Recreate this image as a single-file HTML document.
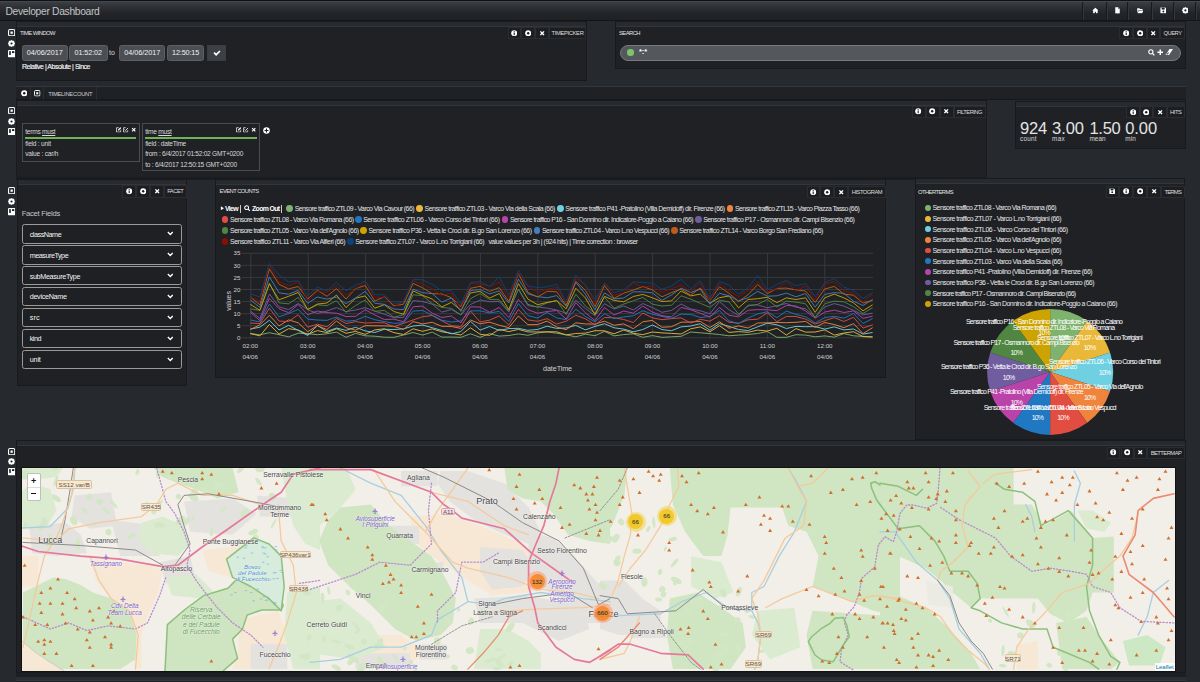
<!DOCTYPE html><html><head><meta charset="utf-8"><style>*{box-sizing:border-box;margin:0;padding:0}
html,body{width:1200px;height:682px;overflow:hidden}
body{background:#26292e;font-family:"Liberation Sans",sans-serif;position:relative}
.a{position:absolute}
.tx{white-space:nowrap;line-height:1}
</style></head><body><svg width="0" height="0" style="position:absolute"><defs>
<symbol id="info" viewBox="0 0 16 16"><circle cx="8" cy="8" r="7.5" fill="#fff"/><rect x="6.6" y="3" width="2.8" height="2.6" fill="#1c1e21"/><rect x="6.6" y="6.6" width="2.8" height="6.4" fill="#1c1e21"/></symbol>
<symbol id="cog" viewBox="0 0 16 16"><path fill="#fff" d="M13.62 5.89 L15.63 5.97 L15.63 10.03 L13.62 10.11 L13.47 10.48 L14.83 11.96 L11.96 14.83 L10.48 13.47 L10.11 13.62 L10.03 15.63 L5.97 15.63 L5.89 13.62 L5.52 13.47 L4.04 14.83 L1.17 11.96 L2.53 10.48 L2.38 10.11 L0.37 10.03 L0.37 5.97 L2.38 5.89 L2.53 5.52 L1.17 4.04 L4.04 1.17 L5.52 2.53 L5.89 2.38 L5.97 0.37 L10.03 0.37 L10.11 2.38 L10.48 2.53 L11.96 1.17 L14.83 4.04 L13.47 5.52Z"/><circle cx="8" cy="8" r="6.2" fill="#fff"/><circle cx="8" cy="8" r="2.5" fill="#1c1e21"/></symbol>
<symbol id="ring" viewBox="0 0 16 16"><circle cx="8" cy="8" r="7.6" fill="#fff"/><circle cx="8" cy="8" r="3" fill="#1c1e21"/></symbol>
<symbol id="times" viewBox="0 0 16 16"><path fill="#fff" d="M2.2 4.6l2.4-2.4L8 5.6l3.4-3.4 2.4 2.4L10.4 8l3.4 3.4-2.4 2.4L8 10.4l-3.4 3.4-2.4-2.4L5.6 8z"/></symbol>
<symbol id="check" viewBox="0 0 16 16"><path fill="#fff" d="M1 8.5l2.3-2.3 3 3L12.7 2.8 15 5.1l-8.7 8.7z"/></symbol>
<symbol id="sq" viewBox="0 0 16 16"><rect x="1.2" y="1.2" width="13.6" height="13.6" rx="3" fill="none" stroke="#fff" stroke-width="2.4"/><rect x="5.5" y="5.5" width="5" height="5" fill="#fff"/></symbol>
<symbol id="squp" viewBox="0 0 16 16"><rect x="1.2" y="1.2" width="13.6" height="13.6" rx="3" fill="none" stroke="#fff" stroke-width="2.4"/><path d="M4 10.5L8 5.5l4 5z" fill="#fff"/></symbol>
<symbol id="cols" viewBox="0 0 16 16"><rect x="0" y="0" width="16" height="16" rx="2" fill="#fff"/><rect x="2.5" y="2.5" width="3.5" height="8" fill="#1c1e21"/><rect x="8.5" y="2.5" width="5" height="4" fill="#1c1e21"/></symbol>
<symbol id="home" viewBox="0 0 16 16"><path fill="#fff" d="M8 1.5L0.5 8.5h2.2V15h4V11h2.6v4h4V8.5h2.2z"/></symbol>
<symbol id="file" viewBox="0 0 16 16"><path fill="#fff" d="M3 0.5h7l3.5 3.5V15.5H3z"/><path fill="#1c1e21" d="M10 0.5v3.5h3.5z"/></symbol>
<symbol id="folder" viewBox="0 0 16 16"><path fill="#fff" d="M0.5 3h5l1.5 1.5h6v2.5H4L0.5 13z"/><path fill="#fff" d="M4.5 8h11l-3.5 6.5H0.8z"/></symbol>
<symbol id="save" viewBox="0 0 16 16"><path fill="#fff" d="M1 1h11.5L15 3.5V15H1z"/><rect x="4" y="1.5" width="7" height="4.5" fill="#1c1e21"/><circle cx="8" cy="10.5" r="2.2" fill="#1c1e21"/></symbol>
<symbol id="search" viewBox="0 0 16 16"><circle cx="6.5" cy="6.5" r="4.8" fill="none" stroke="#fff" stroke-width="2.6"/><path d="M9.5 9.5l5 5" stroke="#fff" stroke-width="3"/></symbol>
<symbol id="plus" viewBox="0 0 16 16"><path fill="#fff" d="M6.2 1h3.6v5.2H15v3.6H9.8V15H6.2V9.8H1V6.2h5.2z"/></symbol>
<symbol id="eraser" viewBox="0 0 16 16"><path fill="#fff" d="M9 2h7L8 14H1z"/><path fill="#54575b" d="M2.6 13l2.8-4h3l-2.8 4z"/></symbol>
<symbol id="chev" viewBox="0 0 16 16"><path fill="none" stroke="#fff" stroke-width="3.2" d="M2 5l6 6 6-6"/></symbol>
<symbol id="pluscirc" viewBox="0 0 16 16"><circle cx="8" cy="8" r="7.5" fill="#fff"/><path fill="#1c1e21" d="M6.8 3.5h2.4v3.3h3.3v2.4H9.2v3.3H6.8V9.2H3.5V6.8h3.3z"/></symbol>
<symbol id="edit" viewBox="0 0 16 16"><path fill="none" stroke="#fff" stroke-width="2" d="M8 2H1.5v12.5H14V8"/><path fill="#fff" d="M13 0.5l2.5 2.5-7 7H6V7.5z"/></symbol>
<symbol id="chk2" viewBox="0 0 16 16"><path fill="none" stroke="#fff" stroke-width="2" d="M8 2H1.5v12.5H14V9"/><path fill="none" stroke="#fff" stroke-width="2.4" d="M4.5 7l3 3L15 2.5"/></symbol>
<symbol id="tri" viewBox="0 0 16 16"><path fill="#fff" d="M3 1l11 7-11 7z"/></symbol>
</defs></svg><div class="a" style="left:0.00px;top:0.00px;width:1200.00px;height:21.00px;background:linear-gradient(#3d4045 0%,#2f3236 30%,#222428 65%,#1f2125 100%);border-top:1px solid #111214;border-bottom:1px solid #15161a;"></div>
<div class="a" style="left:0.00px;top:1.00px;width:1200.00px;height:0.80px;background:#44484c;"></div>
<div class="a tx" style="left:5.50px;top:7.00px;font-size:10.30px;color:#c4c4c4;letter-spacing:-0.325px;">Developer Dashboard</div>
<div class="a" style="left:1083.00px;top:2.00px;width:1.00px;height:18.00px;background:#34373c;"></div>
<div class="a" style="left:1082.00px;top:2.00px;width:1.00px;height:18.00px;background:#18191c;"></div>
<div class="a" style="left:1107.00px;top:2.00px;width:1.00px;height:18.00px;background:#34373c;"></div>
<div class="a" style="left:1106.00px;top:2.00px;width:1.00px;height:18.00px;background:#18191c;"></div>
<div class="a" style="left:1128.00px;top:2.00px;width:1.00px;height:18.00px;background:#34373c;"></div>
<div class="a" style="left:1127.00px;top:2.00px;width:1.00px;height:18.00px;background:#18191c;"></div>
<div class="a" style="left:1152.00px;top:2.00px;width:1.00px;height:18.00px;background:#34373c;"></div>
<div class="a" style="left:1151.00px;top:2.00px;width:1.00px;height:18.00px;background:#18191c;"></div>
<div class="a" style="left:1174.00px;top:2.00px;width:1.00px;height:18.00px;background:#34373c;"></div>
<div class="a" style="left:1173.00px;top:2.00px;width:1.00px;height:18.00px;background:#18191c;"></div>
<div class="a" style="left:1196.00px;top:2.00px;width:1.00px;height:18.00px;background:#34373c;"></div>
<div class="a" style="left:1195.00px;top:2.00px;width:1.00px;height:18.00px;background:#18191c;"></div>
<svg class="a" style="left:1091.60px;top:7.10px" width="6.80" height="6.80" viewBox="0 0 16 16"><use href="#home" fill="#e0e0e0"/></svg>
<svg class="a" style="left:1113.60px;top:7.10px" width="6.80" height="6.80" viewBox="0 0 16 16"><use href="#file" fill="#e0e0e0"/></svg>
<svg class="a" style="left:1136.60px;top:7.10px" width="6.80" height="6.80" viewBox="0 0 16 16"><use href="#folder" fill="#e0e0e0"/></svg>
<svg class="a" style="left:1159.60px;top:7.10px" width="6.80" height="6.80" viewBox="0 0 16 16"><use href="#save" fill="#e0e0e0"/></svg>
<svg class="a" style="left:1181.60px;top:7.10px" width="6.80" height="6.80" viewBox="0 0 16 16"><use href="#cog" fill="#e0e0e0"/></svg>
<svg class="a" style="left:7.65px;top:29.05px" width="7.30" height="7.30" viewBox="0 0 16 16"><use href="#sq" fill="#fff"/></svg>
<svg class="a" style="left:7.80px;top:39.70px" width="7.00" height="7.00" viewBox="0 0 16 16"><use href="#cog" fill="#fff"/></svg>
<svg class="a" style="left:7.55px;top:50.15px" width="7.50" height="7.50" viewBox="0 0 16 16"><use href="#cols" fill="#fff"/></svg>
<svg class="a" style="left:7.65px;top:107.15px" width="7.30" height="7.30" viewBox="0 0 16 16"><use href="#sq" fill="#fff"/></svg>
<svg class="a" style="left:7.80px;top:118.00px" width="7.00" height="7.00" viewBox="0 0 16 16"><use href="#cog" fill="#fff"/></svg>
<svg class="a" style="left:7.55px;top:127.75px" width="7.50" height="7.50" viewBox="0 0 16 16"><use href="#cols" fill="#fff"/></svg>
<svg class="a" style="left:7.65px;top:186.75px" width="7.30" height="7.30" viewBox="0 0 16 16"><use href="#sq" fill="#fff"/></svg>
<svg class="a" style="left:7.80px;top:197.90px" width="7.00" height="7.00" viewBox="0 0 16 16"><use href="#cog" fill="#fff"/></svg>
<svg class="a" style="left:7.55px;top:208.25px" width="7.50" height="7.50" viewBox="0 0 16 16"><use href="#cols" fill="#fff"/></svg>
<svg class="a" style="left:7.65px;top:448.15px" width="7.30" height="7.30" viewBox="0 0 16 16"><use href="#sq" fill="#fff"/></svg>
<svg class="a" style="left:7.80px;top:458.30px" width="7.00" height="7.00" viewBox="0 0 16 16"><use href="#cog" fill="#fff"/></svg>
<svg class="a" style="left:7.55px;top:468.05px" width="7.50" height="7.50" viewBox="0 0 16 16"><use href="#cols" fill="#fff"/></svg>
<div class="a" style="left:16.00px;top:21.00px;width:571.00px;height:60.00px;background:#1f2125;border:1px solid #191a1d;"></div>
<div class="a" style="left:17.00px;top:22.00px;width:569.00px;height:5.00px;background:#272a2e;border-bottom:1px solid #32353a;"></div>
<div class="a tx" style="left:20.00px;top:31.00px;font-size:5.80px;color:#e2e2e2;letter-spacing:-0.537px;">TIME WINDOW</div>
<div class="a" style="left:507.50px;top:26.70px;width:13.50px;height:12.30px;background:#1c1e21;border:1px solid #2a2c30;"></div>
<svg class="a" style="left:511.05px;top:29.65px" width="6.40" height="6.40" viewBox="0 0 16 16"><use href="#info" fill="#fff"/></svg>
<div class="a" style="left:521.00px;top:26.70px;width:14.00px;height:12.30px;background:#1c1e21;border:1px solid #2a2c30;"></div>
<svg class="a" style="left:524.80px;top:29.65px" width="6.40" height="6.40" viewBox="0 0 16 16"><use href="#ring" fill="#fff"/></svg>
<div class="a" style="left:535.00px;top:26.70px;width:14.00px;height:12.30px;background:#1c1e21;border:1px solid #2a2c30;"></div>
<svg class="a" style="left:538.80px;top:29.65px" width="6.40" height="6.40" viewBox="0 0 16 16"><use href="#times" fill="#fff"/></svg>
<div class="a" style="left:549.00px;top:26.70px;width:37.00px;height:12.30px;background:#1c1e21;border:1px solid #2a2c30;"></div>
<div class="a tx" style="left:551.50px;top:31.00px;font-size:5.80px;color:#dcdcdc;letter-spacing:-0.344px;">TIMEPICKER</div>
<div class="a" style="left:22.00px;top:44.50px;width:45.50px;height:16.50px;background:#4b4e53;border:1px solid #5c5f63;border-radius:2.5px;"></div>
<div class="a tx" style="left:26.75px;top:49.00px;font-size:7.20px;color:#f2f2f2;letter-spacing:0.002px;">04/06/2017</div>
<div class="a" style="left:69.00px;top:44.50px;width:38.50px;height:16.50px;background:#4b4e53;border:1px solid #5c5f63;border-radius:2.5px;"></div>
<div class="a tx" style="left:74.50px;top:49.00px;font-size:7.20px;color:#f2f2f2;letter-spacing:-0.061px;">01:52:02</div>
<div class="a" style="left:119.30px;top:44.50px;width:45.70px;height:16.50px;background:#4b4e53;border:1px solid #5c5f63;border-radius:2.5px;"></div>
<div class="a tx" style="left:124.15px;top:49.00px;font-size:7.20px;color:#f2f2f2;letter-spacing:0.002px;">04/06/2017</div>
<div class="a" style="left:166.60px;top:44.50px;width:37.90px;height:16.50px;background:#4b4e53;border:1px solid #5c5f63;border-radius:2.5px;"></div>
<div class="a tx" style="left:172.05px;top:49.00px;font-size:7.20px;color:#f2f2f2;letter-spacing:-0.123px;">12:50:15</div>
<div class="a tx" style="left:109.00px;top:49.00px;font-size:7.00px;color:#d8d8d8;letter-spacing:0.078px;">to</div>
<div class="a" style="left:207.00px;top:45.00px;width:19.00px;height:15.50px;background:#3d4045;border:1px solid #393c40;"></div>
<svg class="a" style="left:212.50px;top:48.50px" width="8.00" height="8.00" viewBox="0 0 16 16"><use href="#check" fill="#fff"/></svg>
<div class="a tx" style="left:22.00px;top:63.00px;font-size:7.00px;color:#ffffff;letter-spacing:-0.484px;-webkit-text-stroke:0.1px #fff;">Relative | Absolute | Since</div>
<div class="a" style="left:615.00px;top:21.00px;width:571.00px;height:48.00px;background:#1f2125;border:1px solid #191a1d;"></div>
<div class="a" style="left:616.00px;top:22.00px;width:569.00px;height:5.00px;background:#272a2e;border-bottom:1px solid #32353a;"></div>
<div class="a tx" style="left:619.00px;top:31.00px;font-size:5.80px;color:#e2e2e2;letter-spacing:-0.529px;">SEARCH</div>
<div class="a" style="left:1119.00px;top:26.70px;width:14.00px;height:12.30px;background:#1c1e21;border:1px solid #2a2c30;"></div>
<svg class="a" style="left:1122.80px;top:29.65px" width="6.40" height="6.40" viewBox="0 0 16 16"><use href="#info" fill="#fff"/></svg>
<div class="a" style="left:1133.00px;top:26.70px;width:14.00px;height:12.30px;background:#1c1e21;border:1px solid #2a2c30;"></div>
<svg class="a" style="left:1136.80px;top:29.65px" width="6.40" height="6.40" viewBox="0 0 16 16"><use href="#ring" fill="#fff"/></svg>
<div class="a" style="left:1147.00px;top:26.70px;width:13.00px;height:12.30px;background:#1c1e21;border:1px solid #2a2c30;"></div>
<svg class="a" style="left:1150.30px;top:29.65px" width="6.40" height="6.40" viewBox="0 0 16 16"><use href="#times" fill="#fff"/></svg>
<div class="a" style="left:1160.00px;top:26.70px;width:25.00px;height:12.30px;background:#1c1e21;border:1px solid #2a2c30;"></div>
<div class="a tx" style="left:1163.50px;top:31.00px;font-size:5.80px;color:#dcdcdc;letter-spacing:-0.503px;">QUERY</div>
<div class="a" style="left:620.00px;top:44.50px;width:560.50px;height:16.50px;background:#54575b;border:1.3px solid #77797c;border-radius:9px;"></div>
<div class="a" style="left:627px;top:49.2px;width:6.6px;height:6.6px;border-radius:50%;background:#7EC46A"></div>
<div class="a tx" style="left:639.00px;top:48.00px;font-size:7.50px;color:#fff;font-weight:bold;letter-spacing:-0.115px;">*:*</div>
<svg class="a" style="left:1148.00px;top:49.00px" width="7.00" height="7.00" viewBox="0 0 16 16"><use href="#search" fill="#fff"/></svg>
<svg class="a" style="left:1156.75px;top:49.05px" width="6.50" height="6.50" viewBox="0 0 16 16"><use href="#plus" fill="#fff"/></svg>
<svg class="a" style="left:1165.00px;top:48.30px" width="8.00" height="8.00" viewBox="0 0 16 16"><use href="#eraser" fill="#fff"/></svg>
<div class="a" style="left:16.00px;top:85.50px;width:1170.00px;height:14.50px;background:#1f2125;border-top:1px solid #34373b;border-bottom:1px solid #17181b;"></div>
<div class="a" style="left:17.00px;top:86.50px;width:13.50px;height:13.00px;border-right:1px solid #2b2d31;"></div>
<div class="a" style="left:30.50px;top:86.50px;width:13.50px;height:13.00px;border-right:1px solid #2b2d31;"></div>
<div class="a" style="left:44.00px;top:86.50px;width:53.00px;height:13.00px;border-right:1px solid #2b2d31;"></div>
<svg class="a" style="left:20.55px;top:90.25px" width="6.50" height="6.50" viewBox="0 0 16 16"><use href="#ring" fill="#fff"/></svg>
<svg class="a" style="left:34.05px;top:90.25px" width="6.50" height="6.50" viewBox="0 0 16 16"><use href="#sq" fill="#fff"/></svg>
<div class="a tx" style="left:48.30px;top:92.00px;font-size:5.80px;color:#d0d0d0;letter-spacing:-0.257px;">TIMELINECOUNT</div>
<div class="a" style="left:16.00px;top:100.00px;width:971.00px;height:80.00px;background:#1f2125;border:1px solid #191a1d;"></div>
<div class="a" style="left:17.00px;top:101.00px;width:969.00px;height:5.00px;background:#272a2e;border-bottom:1px solid #32353a;"></div>
<div class="a" style="left:911.50px;top:105.75px;width:14.00px;height:11.75px;background:#1c1e21;border:1px solid #2a2c30;"></div>
<svg class="a" style="left:915.30px;top:108.42px" width="6.40" height="6.40" viewBox="0 0 16 16"><use href="#info" fill="#fff"/></svg>
<div class="a" style="left:925.50px;top:105.75px;width:14.00px;height:11.75px;background:#1c1e21;border:1px solid #2a2c30;"></div>
<svg class="a" style="left:929.30px;top:108.42px" width="6.40" height="6.40" viewBox="0 0 16 16"><use href="#ring" fill="#fff"/></svg>
<div class="a" style="left:939.50px;top:105.75px;width:14.00px;height:11.75px;background:#1c1e21;border:1px solid #2a2c30;"></div>
<svg class="a" style="left:943.30px;top:108.42px" width="6.40" height="6.40" viewBox="0 0 16 16"><use href="#times" fill="#fff"/></svg>
<div class="a" style="left:953.50px;top:105.75px;width:32.00px;height:11.75px;background:#1c1e21;border:1px solid #2a2c30;"></div>
<div class="a tx" style="left:957.00px;top:110.00px;font-size:5.80px;color:#dcdcdc;letter-spacing:-0.540px;">FILTERING</div>
<div class="a" style="left:22.40px;top:123.10px;width:117.20px;height:38.50px;border:1px solid #4b4c4f;"></div>
<div class="a tx" style="left:25.30px;top:129.00px;font-size:6.60px;color:#d8d8d8;letter-spacing:-0.263px;">terms <span style="text-decoration:underline">must</span></div>
<div class="a" style="left:25.00px;top:137.00px;width:111.30px;height:1.60px;background:#6fb358;"></div>
<div class="a tx" style="left:25.30px;top:141.00px;font-size:6.60px;color:#d8d8d8;letter-spacing:-0.228px;">field : unit</div>
<div class="a tx" style="left:25.30px;top:151.00px;font-size:6.60px;color:#d8d8d8;letter-spacing:-0.225px;">value : car/h</div>
<svg class="a" style="left:116.25px;top:127.25px" width="5.50" height="5.50" viewBox="0 0 16 16"><use href="#edit" fill="#fff"/></svg>
<svg class="a" style="left:123.25px;top:127.25px" width="5.50" height="5.50" viewBox="0 0 16 16"><use href="#chk2" fill="#fff"/></svg>
<svg class="a" style="left:130.55px;top:127.45px" width="5.50" height="5.50" viewBox="0 0 16 16"><use href="#times" fill="#fff"/></svg>
<div class="a" style="left:142.25px;top:123.10px;width:117.75px;height:48.40px;border:1px solid #4b4c4f;"></div>
<div class="a tx" style="left:145.25px;top:129.00px;font-size:6.60px;color:#d8d8d8;letter-spacing:-0.255px;">time <span style="text-decoration:underline">must</span></div>
<div class="a" style="left:145.00px;top:137.00px;width:111.50px;height:1.60px;background:#6fb358;"></div>
<div class="a tx" style="left:145.25px;top:141.00px;font-size:6.60px;color:#d8d8d8;letter-spacing:-0.253px;">field : dateTime</div>
<div class="a tx" style="left:145.25px;top:151.00px;font-size:6.60px;color:#d8d8d8;letter-spacing:-0.275px;">from : 6/4/2017 01:52:02 GMT+0200</div>
<div class="a tx" style="left:145.25px;top:162.00px;font-size:6.60px;color:#d8d8d8;letter-spacing:-0.244px;">to : 6/4/2017 12:50:15 GMT+0200</div>
<svg class="a" style="left:236.25px;top:127.25px" width="5.50" height="5.50" viewBox="0 0 16 16"><use href="#edit" fill="#fff"/></svg>
<svg class="a" style="left:243.25px;top:127.25px" width="5.50" height="5.50" viewBox="0 0 16 16"><use href="#chk2" fill="#fff"/></svg>
<svg class="a" style="left:250.55px;top:127.45px" width="5.50" height="5.50" viewBox="0 0 16 16"><use href="#times" fill="#fff"/></svg>
<svg class="a" style="left:263.00px;top:127.00px" width="7.00" height="7.00" viewBox="0 0 16 16"><use href="#pluscirc" fill="#fff"/></svg>
<div class="a" style="left:16.00px;top:177.00px;width:971.00px;height:2.60px;background:#1b1c1f;"></div>
<div class="a" style="left:1014.50px;top:100.50px;width:171.00px;height:48.50px;background:#1f2125;border:1px solid #191a1d;"></div>
<div class="a" style="left:1015.50px;top:101.50px;width:169.00px;height:5.00px;background:#272a2e;border-bottom:1px solid #32353a;"></div>
<div class="a" style="left:1126.00px;top:106.00px;width:13.50px;height:11.50px;background:#1c1e21;border:1px solid #2a2c30;"></div>
<svg class="a" style="left:1129.55px;top:108.55px" width="6.40" height="6.40" viewBox="0 0 16 16"><use href="#info" fill="#fff"/></svg>
<div class="a" style="left:1139.50px;top:106.00px;width:13.50px;height:11.50px;background:#1c1e21;border:1px solid #2a2c30;"></div>
<svg class="a" style="left:1143.05px;top:108.55px" width="6.40" height="6.40" viewBox="0 0 16 16"><use href="#ring" fill="#fff"/></svg>
<div class="a" style="left:1153.00px;top:106.00px;width:13.50px;height:11.50px;background:#1c1e21;border:1px solid #2a2c30;"></div>
<svg class="a" style="left:1156.55px;top:108.55px" width="6.40" height="6.40" viewBox="0 0 16 16"><use href="#times" fill="#fff"/></svg>
<div class="a" style="left:1166.50px;top:106.00px;width:18.50px;height:11.50px;background:#1c1e21;border:1px solid #2a2c30;"></div>
<div class="a tx" style="left:1170.00px;top:110.00px;font-size:5.80px;color:#dcdcdc;letter-spacing:-0.430px;">HITS</div>
<div class="a tx" style="left:1020.00px;top:120.00px;font-size:16.50px;color:#e4e4e4;letter-spacing:-0.177px;">924</div>
<div class="a tx" style="left:1020.00px;top:136.00px;font-size:6.40px;color:#d8d8d8;letter-spacing:0.212px;">count</div>
<div class="a tx" style="left:1052.10px;top:120.00px;font-size:16.50px;color:#e4e4e4;letter-spacing:-0.056px;">3.00</div>
<div class="a tx" style="left:1052.10px;top:136.00px;font-size:6.40px;color:#d8d8d8;letter-spacing:0.274px;">max</div>
<div class="a tx" style="left:1089.50px;top:120.00px;font-size:16.50px;color:#e4e4e4;letter-spacing:-0.306px;">1.50</div>
<div class="a tx" style="left:1089.50px;top:136.00px;font-size:6.40px;color:#d8d8d8;letter-spacing:0.050px;">mean</div>
<div class="a tx" style="left:1125.30px;top:120.00px;font-size:16.50px;color:#e4e4e4;letter-spacing:-0.106px;">0.00</div>
<div class="a tx" style="left:1125.30px;top:136.00px;font-size:6.40px;color:#d8d8d8;letter-spacing:0.129px;">min</div>
<div class="a" style="left:16.90px;top:178.60px;width:170.00px;height:207.00px;background:#1f2125;border:1px solid #191a1d;"></div>
<div class="a" style="left:17.90px;top:179.60px;width:168.00px;height:5.00px;background:#272a2e;border-bottom:1px solid #32353a;"></div>
<div class="a" style="left:122.30px;top:185.00px;width:13.70px;height:12.80px;background:#1c1e21;border:1px solid #2a2c30;"></div>
<svg class="a" style="left:125.95px;top:188.20px" width="6.40" height="6.40" viewBox="0 0 16 16"><use href="#info" fill="#fff"/></svg>
<div class="a" style="left:136.00px;top:185.00px;width:14.00px;height:12.80px;background:#1c1e21;border:1px solid #2a2c30;"></div>
<svg class="a" style="left:139.80px;top:188.20px" width="6.40" height="6.40" viewBox="0 0 16 16"><use href="#ring" fill="#fff"/></svg>
<div class="a" style="left:150.00px;top:185.00px;width:14.00px;height:12.80px;background:#1c1e21;border:1px solid #2a2c30;"></div>
<svg class="a" style="left:153.80px;top:188.20px" width="6.40" height="6.40" viewBox="0 0 16 16"><use href="#times" fill="#fff"/></svg>
<div class="a" style="left:164.00px;top:185.00px;width:22.50px;height:12.80px;background:#1c1e21;border:1px solid #2a2c30;"></div>
<div class="a tx" style="left:167.15px;top:189.00px;font-size:5.80px;color:#dcdcdc;letter-spacing:-0.498px;">FACET</div>
<div class="a tx" style="left:21.70px;top:210.00px;font-size:7.60px;color:#c8c8c8;letter-spacing:-0.255px;">Facet Fields</div>
<div class="a" style="left:22.00px;top:224.30px;width:160.00px;height:19.40px;border:1.2px solid #9a9a9a;border-radius:2.5px;background:#1e2024;"></div>
<div class="a tx" style="left:29.70px;top:231.00px;font-size:7.20px;color:#f4f4f4;letter-spacing:-0.451px;">className</div>
<svg class="a" style="left:166.75px;top:230.45px" width="6.50" height="6.50" viewBox="0 0 16 16"><use href="#chev" fill="#fff"/></svg>
<div class="a" style="left:22.00px;top:245.20px;width:160.00px;height:19.40px;border:1.2px solid #9a9a9a;border-radius:2.5px;background:#1e2024;"></div>
<div class="a tx" style="left:29.70px;top:252.00px;font-size:7.20px;color:#f4f4f4;letter-spacing:-0.459px;">measureType</div>
<svg class="a" style="left:166.75px;top:251.35px" width="6.50" height="6.50" viewBox="0 0 16 16"><use href="#chev" fill="#fff"/></svg>
<div class="a" style="left:22.00px;top:266.10px;width:160.00px;height:19.40px;border:1.2px solid #9a9a9a;border-radius:2.5px;background:#1e2024;"></div>
<div class="a tx" style="left:29.70px;top:273.00px;font-size:7.20px;color:#f4f4f4;letter-spacing:-0.331px;">subMeasureType</div>
<svg class="a" style="left:166.75px;top:272.25px" width="6.50" height="6.50" viewBox="0 0 16 16"><use href="#chev" fill="#fff"/></svg>
<div class="a" style="left:22.00px;top:287.00px;width:160.00px;height:19.40px;border:1.2px solid #9a9a9a;border-radius:2.5px;background:#1e2024;"></div>
<div class="a tx" style="left:29.70px;top:293.00px;font-size:7.20px;color:#f4f4f4;letter-spacing:-0.295px;">deviceName</div>
<svg class="a" style="left:166.75px;top:293.15px" width="6.50" height="6.50" viewBox="0 0 16 16"><use href="#chev" fill="#fff"/></svg>
<div class="a" style="left:22.00px;top:308.00px;width:160.00px;height:19.40px;border:1.2px solid #9a9a9a;border-radius:2.5px;background:#1e2024;"></div>
<div class="a tx" style="left:29.70px;top:314.00px;font-size:7.20px;color:#f4f4f4;letter-spacing:0.135px;">src</div>
<svg class="a" style="left:166.75px;top:314.15px" width="6.50" height="6.50" viewBox="0 0 16 16"><use href="#chev" fill="#fff"/></svg>
<div class="a" style="left:22.00px;top:329.00px;width:160.00px;height:19.40px;border:1.2px solid #9a9a9a;border-radius:2.5px;background:#1e2024;"></div>
<div class="a tx" style="left:29.70px;top:335.00px;font-size:7.20px;color:#f4f4f4;letter-spacing:-0.422px;">kind</div>
<svg class="a" style="left:166.75px;top:335.15px" width="6.50" height="6.50" viewBox="0 0 16 16"><use href="#chev" fill="#fff"/></svg>
<div class="a" style="left:22.00px;top:349.90px;width:160.00px;height:19.40px;border:1.2px solid #9a9a9a;border-radius:2.5px;background:#1e2024;"></div>
<div class="a tx" style="left:29.70px;top:356.00px;font-size:7.20px;color:#f4f4f4;letter-spacing:-0.148px;">unit</div>
<svg class="a" style="left:166.75px;top:356.05px" width="6.50" height="6.50" viewBox="0 0 16 16"><use href="#chev" fill="#fff"/></svg>
<div class="a" style="left:215.40px;top:178.60px;width:671.00px;height:199.70px;background:#1f2125;border:1px solid #191a1d;"></div>
<div class="a" style="left:216.40px;top:179.60px;width:669.00px;height:5.00px;background:#272a2e;border-bottom:1px solid #32353a;"></div>
<div class="a tx" style="left:219.60px;top:189.00px;font-size:5.80px;color:#e2e2e2;letter-spacing:-0.534px;">EVENT COUNTS</div>
<div class="a" style="left:806.80px;top:185.80px;width:13.60px;height:12.20px;background:#1c1e21;border:1px solid #2a2c30;"></div>
<svg class="a" style="left:810.40px;top:188.70px" width="6.40" height="6.40" viewBox="0 0 16 16"><use href="#info" fill="#fff"/></svg>
<div class="a" style="left:820.40px;top:185.80px;width:13.80px;height:12.20px;background:#1c1e21;border:1px solid #2a2c30;"></div>
<svg class="a" style="left:824.10px;top:188.70px" width="6.40" height="6.40" viewBox="0 0 16 16"><use href="#ring" fill="#fff"/></svg>
<div class="a" style="left:834.20px;top:185.80px;width:13.80px;height:12.20px;background:#1c1e21;border:1px solid #2a2c30;"></div>
<svg class="a" style="left:837.90px;top:188.70px" width="6.40" height="6.40" viewBox="0 0 16 16"><use href="#times" fill="#fff"/></svg>
<div class="a" style="left:848.00px;top:185.80px;width:38.00px;height:12.20px;background:#1c1e21;border:1px solid #2a2c30;"></div>
<div class="a tx" style="left:851.85px;top:190.00px;font-size:5.80px;color:#dcdcdc;letter-spacing:-0.522px;">HISTOGRAM</div>
<div class="a" style="left:914.80px;top:178.00px;width:270.50px;height:262.00px;background:#1f2125;border:1px solid #191a1d;"></div>
<div class="a" style="left:915.80px;top:179.00px;width:268.50px;height:5.00px;background:#272a2e;border-bottom:1px solid #32353a;"></div>
<div class="a tx" style="left:918.00px;top:190.00px;font-size:5.80px;color:#e2e2e2;letter-spacing:-0.548px;">OTHERTERMS</div>
<div class="a" style="left:1105.50px;top:185.50px;width:13.50px;height:12.00px;background:#1c1e21;border:1px solid #2a2c30;"></div>
<svg class="a" style="left:1109.05px;top:188.30px" width="6.40" height="6.40" viewBox="0 0 16 16"><use href="#save" fill="#fff"/></svg>
<div class="a" style="left:1119.00px;top:185.50px;width:14.00px;height:12.00px;background:#1c1e21;border:1px solid #2a2c30;"></div>
<svg class="a" style="left:1122.80px;top:188.30px" width="6.40" height="6.40" viewBox="0 0 16 16"><use href="#info" fill="#fff"/></svg>
<div class="a" style="left:1133.00px;top:185.50px;width:14.00px;height:12.00px;background:#1c1e21;border:1px solid #2a2c30;"></div>
<svg class="a" style="left:1136.80px;top:188.30px" width="6.40" height="6.40" viewBox="0 0 16 16"><use href="#ring" fill="#fff"/></svg>
<div class="a" style="left:1147.00px;top:185.50px;width:13.50px;height:12.00px;background:#1c1e21;border:1px solid #2a2c30;"></div>
<svg class="a" style="left:1150.55px;top:188.30px" width="6.40" height="6.40" viewBox="0 0 16 16"><use href="#times" fill="#fff"/></svg>
<div class="a" style="left:1160.50px;top:185.50px;width:24.50px;height:12.00px;background:#1c1e21;border:1px solid #2a2c30;"></div>
<div class="a tx" style="left:1164.40px;top:190.00px;font-size:5.80px;color:#dcdcdc;letter-spacing:-0.719px;">TERMS</div>
<div class="a" style="left:16.00px;top:439.50px;width:1169.50px;height:233.50px;background:#1f2125;border:1px solid #191a1d;"></div>
<div class="a" style="left:17.00px;top:440.50px;width:1167.50px;height:5.00px;background:#272a2e;border-bottom:1px solid #32353a;"></div>
<div class="a" style="left:21.00px;top:467.00px;width:1155.00px;height:204.50px;background:#111214;"></div>
<div class="a" style="left:1106.70px;top:446.50px;width:13.80px;height:12.00px;background:#1c1e21;border:1px solid #2a2c30;"></div>
<svg class="a" style="left:1110.40px;top:449.30px" width="6.40" height="6.40" viewBox="0 0 16 16"><use href="#info" fill="#fff"/></svg>
<div class="a" style="left:1120.50px;top:446.50px;width:13.50px;height:12.00px;background:#1c1e21;border:1px solid #2a2c30;"></div>
<svg class="a" style="left:1124.05px;top:449.30px" width="6.40" height="6.40" viewBox="0 0 16 16"><use href="#ring" fill="#fff"/></svg>
<div class="a" style="left:1134.00px;top:446.50px;width:13.00px;height:12.00px;background:#1c1e21;border:1px solid #2a2c30;"></div>
<svg class="a" style="left:1137.30px;top:449.30px" width="6.40" height="6.40" viewBox="0 0 16 16"><use href="#times" fill="#fff"/></svg>
<div class="a" style="left:1147.00px;top:446.50px;width:38.00px;height:12.00px;background:#1c1e21;border:1px solid #2a2c30;"></div>
<div class="a tx" style="left:1150.70px;top:451.00px;font-size:5.80px;color:#dcdcdc;letter-spacing:-0.537px;">BETTERMAP</div>
<div class="a" style="left:16.00px;top:673.00px;width:1170.00px;height:3.50px;background:#1d1f22;"></div>
<div class="a" style="left:16.00px;top:676.50px;width:1170.00px;height:3.50px;background:#2a2d31;"></div>
<div class="a" style="left:16.00px;top:680.00px;width:1170.00px;height:1.00px;background:#34373b;"></div>
<div class="a" style="left:16.00px;top:681.00px;width:1170.00px;height:1.00px;background:#1f2125;"></div>
<svg class="a" style="left:0;top:0" width="1200" height="682">
<line x1="241.5" x2="873" y1="337.80" y2="337.80" stroke="#3a3c40" stroke-width="0.9"/>
<line x1="241.5" x2="873" y1="325.73" y2="325.73" stroke="#3a3c40" stroke-width="0.9"/>
<line x1="241.5" x2="873" y1="313.65" y2="313.65" stroke="#3a3c40" stroke-width="0.9"/>
<line x1="241.5" x2="873" y1="301.57" y2="301.57" stroke="#3a3c40" stroke-width="0.9"/>
<line x1="241.5" x2="873" y1="289.50" y2="289.50" stroke="#3a3c40" stroke-width="0.9"/>
<line x1="241.5" x2="873" y1="277.43" y2="277.43" stroke="#3a3c40" stroke-width="0.9"/>
<line x1="241.5" x2="873" y1="265.35" y2="265.35" stroke="#3a3c40" stroke-width="0.9"/>
<line x1="241.5" x2="873" y1="253.28" y2="253.28" stroke="#3a3c40" stroke-width="0.9"/>
<line x1="250.80" x2="250.80" y1="253" y2="338.5" stroke="#3a3c40" stroke-width="0.9"/>
<line x1="308.20" x2="308.20" y1="253" y2="338.5" stroke="#3a3c40" stroke-width="0.9"/>
<line x1="365.60" x2="365.60" y1="253" y2="338.5" stroke="#3a3c40" stroke-width="0.9"/>
<line x1="423.00" x2="423.00" y1="253" y2="338.5" stroke="#3a3c40" stroke-width="0.9"/>
<line x1="480.40" x2="480.40" y1="253" y2="338.5" stroke="#3a3c40" stroke-width="0.9"/>
<line x1="537.80" x2="537.80" y1="253" y2="338.5" stroke="#3a3c40" stroke-width="0.9"/>
<line x1="595.20" x2="595.20" y1="253" y2="338.5" stroke="#3a3c40" stroke-width="0.9"/>
<line x1="652.60" x2="652.60" y1="253" y2="338.5" stroke="#3a3c40" stroke-width="0.9"/>
<line x1="710.00" x2="710.00" y1="253" y2="338.5" stroke="#3a3c40" stroke-width="0.9"/>
<line x1="767.40" x2="767.40" y1="253" y2="338.5" stroke="#3a3c40" stroke-width="0.9"/>
<line x1="824.80" x2="824.80" y1="253" y2="338.5" stroke="#3a3c40" stroke-width="0.9"/>
<polyline fill="none" stroke="#7EB26D" stroke-width="1" stroke-opacity="0.92" stroke-linejoin="round" points="250.3,333.5 259.9,334.8 269.4,332.7 279.0,334.7 288.6,336.8 298.2,333.2 307.7,333.7 317.3,334.7 326.9,333.8 336.5,332.1 346.0,337.3 355.6,333.4 365.2,335.8 374.8,336.2 384.3,337.2 393.9,337.3 403.5,335.0 413.1,332.5 422.6,335.1 432.2,332.1 441.8,337.1 451.4,337.0 460.9,337.3 470.5,333.8 480.1,337.3 489.6,333.6 499.2,336.1 508.8,335.5 518.4,333.9 527.9,335.3 537.5,332.9 547.1,331.9 556.7,333.2 566.2,334.9 575.8,336.8 585.4,334.2 595.0,335.7 604.5,331.4 614.1,335.9 623.7,334.6 633.3,333.8 642.8,337.3 652.4,335.6 662.0,337.3 671.6,336.8 681.1,336.3 690.7,332.0 700.3,332.8 709.9,333.6 719.4,334.5 729.0,335.8 738.6,335.1 748.1,334.5 757.7,333.5 767.3,331.5 776.9,337.3 786.4,337.3 796.0,334.7 805.6,335.1 815.2,336.8 824.7,335.9 834.3,337.1 843.9,333.6 853.5,335.8 863.0,336.4 872.6,337.2"/>
<polyline fill="none" stroke="#EAB839" stroke-width="1" stroke-opacity="0.92" stroke-linejoin="round" points="250.3,333.5 259.9,335.9 269.4,324.4 279.0,334.1 288.6,328.7 298.2,330.0 307.7,334.4 317.3,330.6 326.9,332.6 336.5,328.7 346.0,333.3 355.6,331.4 365.2,334.4 374.8,329.9 384.3,328.8 393.9,332.6 403.5,334.5 413.1,328.8 422.6,331.3 432.2,328.9 441.8,331.8 451.4,333.3 460.9,335.0 470.5,327.8 480.1,334.3 489.6,335.4 499.2,329.4 508.8,331.6 518.4,329.4 527.9,331.9 537.5,332.0 547.1,331.8 556.7,331.8 566.2,334.9 575.8,333.5 585.4,333.1 595.0,330.7 604.5,330.8 614.1,333.8 623.7,330.0 633.3,333.2 642.8,334.7 652.4,332.0 662.0,332.9 671.6,333.4 681.1,334.0 690.7,328.8 700.3,326.9 709.9,331.8 719.4,325.7 729.0,332.4 738.6,331.6 748.1,332.3 757.7,330.1 767.3,331.0 776.9,328.3 786.4,335.1 796.0,328.6 805.6,332.1 815.2,332.0 824.7,329.8 834.3,335.1 843.9,333.0 853.5,331.7 863.0,336.6 872.6,336.8"/>
<polyline fill="none" stroke="#6ED0E0" stroke-width="1" stroke-opacity="0.92" stroke-linejoin="round" points="250.3,329.1 259.9,327.2 269.4,320.3 279.0,330.0 288.6,325.3 298.2,330.4 307.7,335.5 317.3,325.4 326.9,331.4 336.5,328.0 346.0,330.4 355.6,327.3 365.2,330.9 374.8,332.5 384.3,329.3 393.9,329.5 403.5,328.9 413.1,326.0 422.6,325.1 432.2,327.7 441.8,330.4 451.4,333.9 460.9,331.6 470.5,321.3 480.1,330.1 489.6,326.5 499.2,330.4 508.8,328.6 518.4,328.3 527.9,330.3 537.5,329.5 547.1,326.2 556.7,328.4 566.2,328.0 575.8,325.4 585.4,329.9 595.0,326.4 604.5,323.7 614.1,327.8 623.7,329.1 633.3,331.8 642.8,329.5 652.4,325.0 662.0,329.6 671.6,330.7 681.1,326.9 690.7,326.0 700.3,323.7 709.9,330.2 719.4,323.5 729.0,326.4 738.6,329.5 748.1,330.6 757.7,326.8 767.3,323.2 776.9,324.8 786.4,328.5 796.0,326.4 805.6,326.7 815.2,326.6 824.7,329.1 834.3,326.9 843.9,329.9 853.5,329.0 863.0,334.1 872.6,332.5"/>
<polyline fill="none" stroke="#EF843C" stroke-width="1" stroke-opacity="0.92" stroke-linejoin="round" points="250.3,329.5 259.9,324.8 269.4,315.3 279.0,325.9 288.6,319.9 298.2,322.8 307.7,331.7 317.3,325.6 326.9,329.5 336.5,321.0 346.0,327.8 355.6,330.1 365.2,325.7 374.8,325.8 384.3,325.9 393.9,326.4 403.5,329.4 413.1,321.6 422.6,323.9 432.2,322.3 441.8,326.3 451.4,326.5 460.9,328.4 470.5,320.0 480.1,323.8 489.6,322.2 499.2,325.2 508.8,327.7 518.4,316.0 527.9,324.7 537.5,324.6 547.1,321.1 556.7,327.0 566.2,329.7 575.8,322.8 585.4,323.9 595.0,324.1 604.5,321.2 614.1,325.3 623.7,323.9 633.3,328.7 642.8,321.8 652.4,320.4 662.0,327.3 671.6,326.7 681.1,322.2 690.7,322.0 700.3,321.4 709.9,327.5 719.4,321.7 729.0,328.2 738.6,325.9 748.1,328.0 757.7,323.0 767.3,322.8 776.9,322.5 786.4,322.7 796.0,322.3 805.6,321.4 815.2,327.5 824.7,322.5 834.3,324.5 843.9,327.7 853.5,323.6 863.0,333.5 872.6,327.7"/>
<polyline fill="none" stroke="#E24D42" stroke-width="1" stroke-opacity="0.92" stroke-linejoin="round" points="250.3,323.0 259.9,323.6 269.4,308.2 279.0,321.1 288.6,321.5 298.2,314.7 307.7,327.2 317.3,324.2 326.9,326.8 336.5,318.3 346.0,323.5 355.6,321.6 365.2,323.0 374.8,322.7 384.3,322.8 393.9,326.8 403.5,323.3 413.1,320.0 422.6,316.7 432.2,315.5 441.8,320.8 451.4,325.7 460.9,326.6 470.5,311.0 480.1,322.0 489.6,320.1 499.2,316.0 508.8,325.1 518.4,309.4 527.9,319.9 537.5,321.3 547.1,318.7 556.7,324.0 566.2,321.2 575.8,315.2 585.4,318.8 595.0,324.9 604.5,317.5 614.1,317.8 623.7,319.5 633.3,322.5 642.8,313.0 652.4,317.8 662.0,319.7 671.6,318.6 681.1,317.9 690.7,323.0 700.3,319.3 709.9,321.2 719.4,315.7 729.0,322.3 738.6,323.2 748.1,319.8 757.7,319.2 767.3,312.8 776.9,321.7 786.4,316.4 796.0,316.5 805.6,319.2 815.2,324.1 824.7,320.7 834.3,317.6 843.9,321.5 853.5,317.3 863.0,328.1 872.6,324.8"/>
<polyline fill="none" stroke="#1F78C1" stroke-width="1" stroke-opacity="0.92" stroke-linejoin="round" points="250.3,320.0 259.9,321.9 269.4,304.1 279.0,316.8 288.6,313.5 298.2,309.4 307.7,319.1 317.3,320.0 326.9,320.4 336.5,317.0 346.0,321.2 355.6,320.4 365.2,316.3 374.8,319.7 384.3,321.5 393.9,323.3 403.5,322.9 413.1,311.1 422.6,310.5 432.2,315.2 441.8,320.2 451.4,322.1 460.9,320.9 470.5,310.9 480.1,310.8 489.6,313.0 499.2,311.4 508.8,321.4 518.4,303.6 527.9,315.5 537.5,318.1 547.1,312.4 556.7,317.9 566.2,319.7 575.8,309.2 585.4,316.5 595.0,321.9 604.5,313.7 614.1,318.6 623.7,316.9 633.3,315.8 642.8,310.7 652.4,314.2 662.0,316.4 671.6,318.4 681.1,314.1 690.7,314.4 700.3,317.5 709.9,316.5 719.4,310.5 729.0,320.9 738.6,323.6 748.1,318.0 757.7,313.9 767.3,311.7 776.9,317.7 786.4,311.0 796.0,314.4 805.6,316.8 815.2,323.0 824.7,317.6 834.3,316.3 843.9,318.2 853.5,313.5 863.0,323.5 872.6,318.6"/>
<polyline fill="none" stroke="#BA43A9" stroke-width="1" stroke-opacity="0.92" stroke-linejoin="round" points="250.3,312.4 259.9,320.5 269.4,298.4 279.0,308.7 288.6,312.7 298.2,304.4 307.7,314.8 317.3,311.0 326.9,312.6 336.5,313.2 346.0,316.5 355.6,316.3 365.2,309.7 374.8,315.0 384.3,319.5 393.9,319.2 403.5,321.7 413.1,306.8 422.6,306.1 432.2,313.2 441.8,317.5 451.4,316.0 460.9,322.9 470.5,306.8 480.1,307.1 489.6,312.2 499.2,307.5 508.8,317.6 518.4,299.4 527.9,309.6 537.5,313.2 547.1,311.5 556.7,310.5 566.2,319.1 575.8,302.6 585.4,312.8 595.0,320.6 604.5,307.5 614.1,315.0 623.7,311.0 633.3,313.2 642.8,306.0 652.4,312.1 662.0,315.7 671.6,316.9 681.1,307.4 690.7,309.7 700.3,313.3 709.9,316.9 719.4,307.5 729.0,315.2 738.6,316.8 748.1,310.3 757.7,309.6 767.3,309.8 776.9,310.6 786.4,305.5 796.0,305.9 805.6,310.9 815.2,318.2 824.7,312.1 834.3,310.1 843.9,312.5 853.5,310.9 863.0,318.3 872.6,316.2"/>
<polyline fill="none" stroke="#705DA0" stroke-width="1" stroke-opacity="0.92" stroke-linejoin="round" points="250.3,310.8 259.9,318.4 269.4,294.0 279.0,306.8 288.6,309.6 298.2,303.5 307.7,309.5 317.3,313.5 326.9,311.0 336.5,307.6 346.0,311.6 355.6,310.0 365.2,307.7 374.8,311.2 384.3,314.1 393.9,317.8 403.5,317.4 413.1,300.6 422.6,301.5 432.2,304.2 441.8,312.1 451.4,309.6 460.9,314.9 470.5,304.5 480.1,300.0 489.6,301.7 499.2,301.5 508.8,312.0 518.4,289.2 527.9,305.7 537.5,306.9 547.1,308.1 556.7,310.0 566.2,313.2 575.8,300.2 585.4,308.6 595.0,315.6 604.5,303.7 614.1,309.1 623.7,305.9 633.3,310.0 642.8,303.5 652.4,307.6 662.0,312.3 671.6,310.4 681.1,304.0 690.7,308.9 700.3,310.8 709.9,313.8 719.4,301.6 729.0,309.7 738.6,315.5 748.1,305.1 757.7,304.9 767.3,307.8 776.9,305.7 786.4,303.5 796.0,307.2 805.6,308.7 815.2,317.1 824.7,307.0 834.3,303.6 843.9,306.1 853.5,310.3 863.0,314.9 872.6,313.1"/>
<polyline fill="none" stroke="#508642" stroke-width="1" stroke-opacity="0.92" stroke-linejoin="round" points="250.3,308.9 259.9,310.4 269.4,282.9 279.0,302.9 288.6,303.8 298.2,297.4 307.7,309.4 317.3,304.9 326.9,305.6 336.5,300.7 346.0,312.4 355.6,305.5 365.2,300.0 374.8,311.4 384.3,310.4 393.9,317.1 403.5,314.8 413.1,294.8 422.6,295.7 432.2,303.7 441.8,307.4 451.4,308.4 460.9,314.8 470.5,298.6 480.1,293.6 489.6,299.5 499.2,299.7 508.8,310.7 518.4,289.1 527.9,304.3 537.5,307.2 547.1,302.9 556.7,300.3 566.2,314.6 575.8,294.2 585.4,306.0 595.0,313.3 604.5,297.2 614.1,308.2 623.7,304.1 633.3,300.8 642.8,297.4 652.4,304.1 662.0,306.0 671.6,305.2 681.1,295.8 690.7,299.1 700.3,303.3 709.9,307.3 719.4,300.2 729.0,301.9 738.6,314.2 748.1,305.9 757.7,304.4 767.3,299.4 776.9,307.0 786.4,301.0 796.0,302.2 805.6,303.8 815.2,317.5 824.7,303.8 834.3,301.1 843.9,301.8 853.5,306.7 863.0,313.4 872.6,307.7"/>
<polyline fill="none" stroke="#CCA300" stroke-width="1" stroke-opacity="0.92" stroke-linejoin="round" points="250.3,304.4 259.9,310.3 269.4,284.0 279.0,299.8 288.6,296.3 298.2,292.5 307.7,309.6 317.3,304.1 326.9,303.0 336.5,295.0 346.0,307.6 355.6,298.2 365.2,295.9 374.8,308.2 384.3,304.7 393.9,311.5 403.5,314.3 413.1,290.9 422.6,295.3 432.2,299.0 441.8,306.9 451.4,302.4 460.9,310.3 470.5,292.9 480.1,291.4 489.6,298.1 499.2,293.5 508.8,309.8 518.4,283.5 527.9,299.1 537.5,304.7 547.1,302.4 556.7,300.8 566.2,308.8 575.8,288.3 585.4,297.9 595.0,314.7 604.5,296.4 614.1,300.4 623.7,301.8 633.3,296.5 642.8,294.4 652.4,297.8 662.0,301.5 671.6,300.9 681.1,291.0 690.7,295.9 700.3,294.1 709.9,303.2 719.4,297.7 729.0,296.0 738.6,307.8 748.1,299.5 757.7,298.7 767.3,297.2 776.9,302.6 786.4,297.9 796.0,299.5 805.6,297.8 815.2,312.3 824.7,297.9 834.3,294.1 843.9,297.9 853.5,302.9 863.0,310.8 872.6,304.8"/>
<polyline fill="none" stroke="#447EBC" stroke-width="1" stroke-opacity="0.92" stroke-linejoin="round" points="250.3,300.0 259.9,307.3 269.4,276.9 279.0,292.8 288.6,294.2 298.2,290.5 307.7,303.3 317.3,297.0 326.9,299.1 336.5,297.2 346.0,303.7 355.6,298.0 365.2,291.3 374.8,303.3 384.3,304.3 393.9,309.0 403.5,309.6 413.1,289.2 422.6,292.7 432.2,293.6 441.8,302.1 451.4,298.0 460.9,311.4 470.5,290.5 480.1,289.6 489.6,293.9 499.2,290.9 508.8,303.1 518.4,279.1 527.9,293.8 537.5,296.6 547.1,297.8 556.7,295.6 566.2,306.2 575.8,282.3 585.4,294.2 595.0,309.8 604.5,292.9 614.1,298.9 623.7,298.0 633.3,291.8 642.8,291.9 652.4,292.9 662.0,300.4 671.6,294.8 681.1,288.1 690.7,292.5 700.3,289.2 709.9,304.2 719.4,293.2 729.0,295.9 738.6,300.9 748.1,297.7 757.7,291.3 767.3,296.2 776.9,295.8 786.4,293.1 796.0,296.8 805.6,293.5 815.2,307.1 824.7,294.5 834.3,292.6 843.9,293.3 853.5,301.2 863.0,305.5 872.6,299.5"/>
<polyline fill="none" stroke="#C15C17" stroke-width="1" stroke-opacity="0.92" stroke-linejoin="round" points="250.3,297.1 259.9,304.8 269.4,268.8 279.0,284.3 288.6,288.9 298.2,286.5 307.7,299.0 317.3,290.3 326.9,296.3 336.5,288.6 346.0,299.0 355.6,288.6 365.2,285.5 374.8,301.0 384.3,296.9 393.9,305.8 403.5,304.2 413.1,283.4 422.6,287.8 432.2,293.7 441.8,293.9 451.4,297.7 460.9,306.5 470.5,288.3 480.1,286.3 489.6,291.4 499.2,287.6 508.8,301.3 518.4,273.4 527.9,292.4 537.5,297.0 547.1,291.3 556.7,291.8 566.2,305.3 575.8,281.3 585.4,290.2 595.0,306.7 604.5,285.5 614.1,298.3 623.7,293.2 633.3,290.0 642.8,286.5 652.4,289.9 662.0,296.8 671.6,292.5 681.1,289.2 690.7,295.1 700.3,287.9 709.9,300.7 719.4,286.8 729.0,293.3 738.6,301.5 748.1,294.7 757.7,284.5 767.3,293.7 776.9,288.4 786.4,288.1 796.0,289.9 805.6,291.0 815.2,302.4 824.7,289.0 834.3,286.4 843.9,294.1 853.5,295.2 863.0,303.1 872.6,300.2"/>
<polyline fill="none" stroke="#890F02" stroke-width="1" stroke-opacity="0.92" stroke-linejoin="round" points="250.3,297.4 259.9,300.7 269.4,264.5 279.0,282.0 288.6,285.6 298.2,281.8 307.7,300.7 317.3,291.5 326.9,292.3 336.5,286.1 346.0,295.1 355.6,289.6 365.2,281.3 374.8,297.3 384.3,297.4 393.9,306.9 403.5,301.3 413.1,280.8 422.6,283.9 432.2,288.8 441.8,295.5 451.4,293.0 460.9,309.1 470.5,283.6 480.1,283.9 489.6,286.4 499.2,282.1 508.8,298.2 518.4,273.1 527.9,286.2 537.5,292.6 547.1,289.2 556.7,287.5 566.2,302.9 575.8,278.2 585.4,284.8 595.0,303.0 604.5,282.8 614.1,295.6 623.7,292.5 633.3,282.8 642.8,287.3 652.4,285.8 662.0,292.5 671.6,288.7 681.1,285.0 690.7,291.5 700.3,283.2 709.9,300.9 719.4,283.4 729.0,290.9 738.6,296.7 748.1,290.2 757.7,281.8 767.3,291.9 776.9,288.7 786.4,281.5 796.0,290.9 805.6,285.9 815.2,299.8 824.7,284.4 834.3,281.4 843.9,290.7 853.5,293.4 863.0,302.1 872.6,293.8"/>
<polyline fill="none" stroke="#0A437C" stroke-width="1" stroke-opacity="0.92" stroke-linejoin="round" points="250.3,293.8 259.9,297.0 269.4,263.4 279.0,275.0 288.6,281.8 298.2,280.6 307.7,295.8 317.3,287.1 326.9,290.9 336.5,282.5 346.0,290.9 355.6,285.2 365.2,281.0 374.8,294.8 384.3,294.8 393.9,304.2 403.5,301.8 413.1,279.4 422.6,279.8 432.2,284.4 441.8,290.9 451.4,290.5 460.9,304.2 470.5,282.5 480.1,281.5 489.6,286.4 499.2,276.9 508.8,295.1 518.4,270.4 527.9,285.9 537.5,287.6 547.1,286.8 556.7,284.4 566.2,301.8 575.8,275.0 585.4,285.2 595.0,299.9 604.5,283.2 614.1,292.6 623.7,290.0 633.3,281.8 642.8,282.5 652.4,283.2 662.0,289.3 671.6,285.9 681.1,279.4 690.7,288.8 700.3,280.6 709.9,298.4 719.4,281.5 729.0,285.2 738.6,294.3 748.1,287.6 757.7,275.5 767.3,290.0 776.9,284.4 786.4,280.3 796.0,285.9 805.6,283.5 815.2,296.7 824.7,282.7 834.3,278.6 843.9,287.1 853.5,290.5 863.0,298.7 872.6,292.6"/>
</svg>
<div class="a tx" style="left:240.50px;top:335.00px;font-size:6.20px;color:#d0d0d0;transform:translateX(-100%);">0</div>
<div class="a tx" style="left:240.50px;top:323.00px;font-size:6.20px;color:#d0d0d0;transform:translateX(-100%);">5</div>
<div class="a tx" style="left:240.50px;top:311.00px;font-size:6.20px;color:#d0d0d0;transform:translateX(-100%);">10</div>
<div class="a tx" style="left:240.50px;top:299.00px;font-size:6.20px;color:#d0d0d0;transform:translateX(-100%);">15</div>
<div class="a tx" style="left:240.50px;top:287.00px;font-size:6.20px;color:#d0d0d0;transform:translateX(-100%);">20</div>
<div class="a tx" style="left:240.50px;top:275.00px;font-size:6.20px;color:#d0d0d0;transform:translateX(-100%);">25</div>
<div class="a tx" style="left:240.50px;top:263.00px;font-size:6.20px;color:#d0d0d0;transform:translateX(-100%);">30</div>
<div class="a tx" style="left:240.50px;top:250.00px;font-size:6.20px;color:#d0d0d0;transform:translateX(-100%);">35</div>
<div class="a tx" style="left:250.20px;top:343.00px;font-size:6.20px;color:#d0d0d0;transform:translateX(-50%);">02:00</div>
<div class="a tx" style="left:250.20px;top:354.00px;font-size:6.20px;color:#d0d0d0;transform:translateX(-50%);">04/06</div>
<div class="a tx" style="left:307.66px;top:343.00px;font-size:6.20px;color:#d0d0d0;transform:translateX(-50%);">03:00</div>
<div class="a tx" style="left:307.66px;top:354.00px;font-size:6.20px;color:#d0d0d0;transform:translateX(-50%);">04/06</div>
<div class="a tx" style="left:365.12px;top:343.00px;font-size:6.20px;color:#d0d0d0;transform:translateX(-50%);">04:00</div>
<div class="a tx" style="left:365.12px;top:354.00px;font-size:6.20px;color:#d0d0d0;transform:translateX(-50%);">04/06</div>
<div class="a tx" style="left:422.58px;top:343.00px;font-size:6.20px;color:#d0d0d0;transform:translateX(-50%);">05:00</div>
<div class="a tx" style="left:422.58px;top:354.00px;font-size:6.20px;color:#d0d0d0;transform:translateX(-50%);">04/06</div>
<div class="a tx" style="left:480.04px;top:343.00px;font-size:6.20px;color:#d0d0d0;transform:translateX(-50%);">06:00</div>
<div class="a tx" style="left:480.04px;top:354.00px;font-size:6.20px;color:#d0d0d0;transform:translateX(-50%);">04/06</div>
<div class="a tx" style="left:537.50px;top:343.00px;font-size:6.20px;color:#d0d0d0;transform:translateX(-50%);">07:00</div>
<div class="a tx" style="left:537.50px;top:354.00px;font-size:6.20px;color:#d0d0d0;transform:translateX(-50%);">04/06</div>
<div class="a tx" style="left:594.96px;top:343.00px;font-size:6.20px;color:#d0d0d0;transform:translateX(-50%);">08:00</div>
<div class="a tx" style="left:594.96px;top:354.00px;font-size:6.20px;color:#d0d0d0;transform:translateX(-50%);">04/06</div>
<div class="a tx" style="left:652.42px;top:343.00px;font-size:6.20px;color:#d0d0d0;transform:translateX(-50%);">09:00</div>
<div class="a tx" style="left:652.42px;top:354.00px;font-size:6.20px;color:#d0d0d0;transform:translateX(-50%);">04/06</div>
<div class="a tx" style="left:709.88px;top:343.00px;font-size:6.20px;color:#d0d0d0;transform:translateX(-50%);">10:00</div>
<div class="a tx" style="left:709.88px;top:354.00px;font-size:6.20px;color:#d0d0d0;transform:translateX(-50%);">04/06</div>
<div class="a tx" style="left:767.34px;top:343.00px;font-size:6.20px;color:#d0d0d0;transform:translateX(-50%);">11:00</div>
<div class="a tx" style="left:767.34px;top:354.00px;font-size:6.20px;color:#d0d0d0;transform:translateX(-50%);">04/06</div>
<div class="a tx" style="left:824.80px;top:343.00px;font-size:6.20px;color:#d0d0d0;transform:translateX(-50%);">12:00</div>
<div class="a tx" style="left:824.80px;top:354.00px;font-size:6.20px;color:#d0d0d0;transform:translateX(-50%);">04/06</div>
<div class="a tx" style="left:557.50px;top:365.00px;font-size:7.20px;color:#d0d0d0;letter-spacing:-0.088px;transform:translateX(-50%);">dateTime</div>
<div class="a tx" style="left:228.3px;top:300.6px;font-size:7px;letter-spacing:-0.1px;color:#d0d0d0;transform:translate(-50%,-50%) rotate(-90deg)">values</div>
<svg class="a" style="left:219.75px;top:206.45px" width="4.50" height="4.50" viewBox="0 0 16 16"><use href="#tri" fill="#fff"/></svg>
<div class="a tx" style="left:225.00px;top:206.00px;font-size:6.90px;color:#fff;font-weight:bold;letter-spacing:-0.645px;">View</div>
<div class="a" style="left:240.00px;top:205.00px;width:1.00px;height:8.00px;background:#ccc;"></div>
<svg class="a" style="left:244.25px;top:205.25px" width="6.50" height="6.50" viewBox="0 0 16 16"><use href="#search" fill="#fff"/></svg>
<div class="a tx" style="left:252.00px;top:206.00px;font-size:6.90px;color:#fff;font-weight:bold;letter-spacing:-0.631px;">Zoom Out</div>
<div class="a" style="left:281.00px;top:205.00px;width:1.00px;height:8.00px;background:#ccc;"></div>
<div class="a" style="left:286.30px;top:205.20px;width:6.8px;height:6.8px;border-radius:50%;background:#7EB26D"></div>
<div class="a tx" style="left:294.70px;top:206.00px;font-size:6.90px;color:#e6e6e6;letter-spacing:-0.529px;">Sensore traffico ZTL09 - Varco Via Cavour (66)</div>
<div class="a" style="left:416.20px;top:205.20px;width:6.8px;height:6.8px;border-radius:50%;background:#EAB839"></div>
<div class="a tx" style="left:424.60px;top:206.00px;font-size:6.90px;color:#e6e6e6;letter-spacing:-0.487px;">Sensore traffico ZTL03 - Varco Via della Scala (66)</div>
<div class="a" style="left:556.90px;top:205.20px;width:6.8px;height:6.8px;border-radius:50%;background:#6ED0E0"></div>
<div class="a tx" style="left:565.30px;top:206.00px;font-size:6.90px;color:#e6e6e6;letter-spacing:-0.505px;">Sensore traffico P41 -Pratolino (Villa Demidoff) dir. Firenze (66)</div>
<div class="a" style="left:726.60px;top:205.20px;width:6.8px;height:6.8px;border-radius:50%;background:#EF843C"></div>
<div class="a tx" style="left:735.00px;top:206.00px;font-size:6.90px;color:#e6e6e6;letter-spacing:-0.540px;">Sensore traffico ZTL15 - Varco Piazza Tasso (66)</div>
<div class="a" style="left:221.70px;top:216.10px;width:6.8px;height:6.8px;border-radius:50%;background:#E24D42"></div>
<div class="a tx" style="left:230.10px;top:217.00px;font-size:6.90px;color:#e6e6e6;letter-spacing:-0.523px;">Sensore traffico ZTL08 - Varco Via Romana (66)</div>
<div class="a" style="left:354.80px;top:216.10px;width:6.8px;height:6.8px;border-radius:50%;background:#1F78C1"></div>
<div class="a tx" style="left:363.20px;top:217.00px;font-size:6.90px;color:#e6e6e6;letter-spacing:-0.444px;">Sensore traffico ZTL06 - Varco Corso dei Tintori (66)</div>
<div class="a" style="left:501.50px;top:216.10px;width:6.8px;height:6.8px;border-radius:50%;background:#BA43A9"></div>
<div class="a tx" style="left:509.90px;top:217.00px;font-size:6.90px;color:#e6e6e6;letter-spacing:-0.505px;">Sensore traffico P16 - San Donnino dir. Indicatore-Poggio a Caiano (66)</div>
<div class="a" style="left:694.80px;top:216.10px;width:6.8px;height:6.8px;border-radius:50%;background:#705DA0"></div>
<div class="a tx" style="left:703.20px;top:217.00px;font-size:6.90px;color:#e6e6e6;letter-spacing:-0.498px;">Sensore traffico P17 - Osmannoro dir. Campi Bisenzio (66)</div>
<div class="a" style="left:221.70px;top:226.90px;width:6.8px;height:6.8px;border-radius:50%;background:#508642"></div>
<div class="a tx" style="left:230.10px;top:228.00px;font-size:6.90px;color:#e6e6e6;letter-spacing:-0.520px;">Sensore traffico ZTL05 - Varco Via dell'Agnolo (66)</div>
<div class="a" style="left:360.00px;top:226.90px;width:6.8px;height:6.8px;border-radius:50%;background:#CCA300"></div>
<div class="a tx" style="left:368.40px;top:228.00px;font-size:6.90px;color:#e6e6e6;letter-spacing:-0.447px;">Sensore traffico P36 - Vetta le Croci dir. B.go San Lorenzo (66)</div>
<div class="a" style="left:533.60px;top:226.90px;width:6.8px;height:6.8px;border-radius:50%;background:#447EBC"></div>
<div class="a tx" style="left:542.00px;top:228.00px;font-size:6.90px;color:#e6e6e6;letter-spacing:-0.522px;">Sensore traffico ZTL04 - Varco L.no Vespucci (66)</div>
<div class="a" style="left:670.80px;top:226.90px;width:6.8px;height:6.8px;border-radius:50%;background:#C15C17"></div>
<div class="a tx" style="left:679.20px;top:228.00px;font-size:6.90px;color:#e6e6e6;letter-spacing:-0.514px;">Sensore traffico ZTL14 - Varco Borgo San Frediano (66)</div>
<div class="a" style="left:221.70px;top:237.90px;width:6.8px;height:6.8px;border-radius:50%;background:#890F02"></div>
<div class="a tx" style="left:230.10px;top:239.00px;font-size:6.90px;color:#e6e6e6;letter-spacing:-0.486px;">Sensore traffico ZTL11 - Varco Via Alfieri (66)</div>
<div class="a" style="left:346.80px;top:237.90px;width:6.8px;height:6.8px;border-radius:50%;background:#0A437C"></div>
<div class="a tx" style="left:355.20px;top:239.00px;font-size:6.90px;color:#e6e6e6;letter-spacing:-0.471px;">Sensore traffico ZTL07 - Varco L.no Torrigiani (66)</div>
<div class="a tx" style="left:488.40px;top:239.00px;font-size:6.90px;color:#e6e6e6;letter-spacing:-0.463px;">value values per 3h | (924 hits) | Time correction : browser</div>
<div class="a" style="left:925.2px;top:205.10px;width:5.8px;height:5.8px;border-radius:50%;background:#7EB26D"></div>
<div class="a tx" style="left:932.50px;top:205.00px;font-size:6.90px;color:#e8e8e8;letter-spacing:-0.521px;">Sensore traffico ZTL08 - Varco Via Romana (66)</div>
<div class="a" style="left:925.2px;top:215.74px;width:5.8px;height:5.8px;border-radius:50%;background:#EAB839"></div>
<div class="a tx" style="left:932.50px;top:216.00px;font-size:6.90px;color:#e8e8e8;letter-spacing:-0.477px;">Sensore traffico ZTL07 - Varco L.no Torrigiani (66)</div>
<div class="a" style="left:925.2px;top:226.38px;width:5.8px;height:5.8px;border-radius:50%;background:#6ED0E0"></div>
<div class="a tx" style="left:932.50px;top:227.00px;font-size:6.90px;color:#e8e8e8;letter-spacing:-0.468px;">Sensore traffico ZTL06 - Varco Corso dei Tintori (66)</div>
<div class="a" style="left:925.2px;top:237.02px;width:5.8px;height:5.8px;border-radius:50%;background:#EF843C"></div>
<div class="a tx" style="left:932.50px;top:237.00px;font-size:6.90px;color:#e8e8e8;letter-spacing:-0.518px;">Sensore traffico ZTL05 - Varco Via dell'Agnolo (66)</div>
<div class="a" style="left:925.2px;top:247.66px;width:5.8px;height:5.8px;border-radius:50%;background:#E24D42"></div>
<div class="a tx" style="left:932.50px;top:248.00px;font-size:6.90px;color:#e8e8e8;letter-spacing:-0.491px;">Sensore traffico ZTL04 - Varco L.no Vespucci (66)</div>
<div class="a" style="left:925.2px;top:258.30px;width:5.8px;height:5.8px;border-radius:50%;background:#1F78C1"></div>
<div class="a tx" style="left:932.50px;top:259.00px;font-size:6.90px;color:#e8e8e8;letter-spacing:-0.502px;">Sensore traffico ZTL03 - Varco Via della Scala (66)</div>
<div class="a" style="left:925.2px;top:268.94px;width:5.8px;height:5.8px;border-radius:50%;background:#BA43A9"></div>
<div class="a tx" style="left:932.50px;top:269.00px;font-size:6.90px;color:#e8e8e8;letter-spacing:-0.502px;">Sensore traffico P41 -Pratolino (Villa Demidoff) dir. Firenze (66)</div>
<div class="a" style="left:925.2px;top:279.58px;width:5.8px;height:5.8px;border-radius:50%;background:#705DA0"></div>
<div class="a tx" style="left:932.50px;top:280.00px;font-size:6.90px;color:#e8e8e8;letter-spacing:-0.473px;">Sensore traffico P36 - Vetta le Croci dir. B.go San Lorenzo (66)</div>
<div class="a" style="left:925.2px;top:290.22px;width:5.8px;height:5.8px;border-radius:50%;background:#508642"></div>
<div class="a tx" style="left:932.50px;top:291.00px;font-size:6.90px;color:#e8e8e8;letter-spacing:-0.640px;">Sensore traffico P17 - Osmannoro dir. Campi Bisenzio (66)</div>
<div class="a" style="left:925.2px;top:300.86px;width:5.8px;height:5.8px;border-radius:50%;background:#CCA300"></div>
<div class="a tx" style="left:932.50px;top:301.00px;font-size:6.90px;color:#e8e8e8;letter-spacing:-0.486px;">Sensore traffico P16 - San Donnino dir. Indicatore-Poggio a Caiano (66)</div>
<svg class="a" style="left:0;top:0" width="1200" height="682">
<path d="M1050.15 371.90 L1050.15 308.90 A63.00 63.00 0 0 1 1087.18 320.93 Z" fill="#7EB26D"/>
<path d="M1050.15 371.90 L1087.18 320.93 A63.00 63.00 0 0 1 1110.07 352.43 Z" fill="#EAB839"/>
<path d="M1050.15 371.90 L1110.07 352.43 A63.00 63.00 0 0 1 1110.07 391.37 Z" fill="#6ED0E0"/>
<path d="M1050.15 371.90 L1110.07 391.37 A63.00 63.00 0 0 1 1087.18 422.87 Z" fill="#EF843C"/>
<path d="M1050.15 371.90 L1087.18 422.87 A63.00 63.00 0 0 1 1050.15 434.90 Z" fill="#E24D42"/>
<path d="M1050.15 371.90 L1050.15 434.90 A63.00 63.00 0 0 1 1013.12 422.87 Z" fill="#1F78C1"/>
<path d="M1050.15 371.90 L1013.12 422.87 A63.00 63.00 0 0 1 990.23 391.37 Z" fill="#BA43A9"/>
<path d="M1050.15 371.90 L990.23 391.37 A63.00 63.00 0 0 1 990.23 352.43 Z" fill="#705DA0"/>
<path d="M1050.15 371.90 L990.23 352.43 A63.00 63.00 0 0 1 1013.12 320.93 Z" fill="#508642"/>
<path d="M1050.15 371.90 L1013.12 320.93 A63.00 63.00 0 0 1 1050.15 308.90 Z" fill="#CCA300"/>
</svg>
<div class="a tx" style="left:1063.50px;top:325.00px;font-size:6.90px;color:#fff;letter-spacing:-0.776px;transform:translateX(-50%);">Sensore traffico ZTL08 - Varco Via Romana</div>
<div class="a tx" style="left:1063.50px;top:335.00px;font-size:6.90px;color:#fff;letter-spacing:-0.766px;transform:translateX(-50%);">10%</div>
<div class="a tx" style="left:1089.50px;top:335.00px;font-size:6.90px;color:#fff;letter-spacing:-0.732px;transform:translateX(-50%);">Sensore traffico ZTL07 - Varco L.no Torrigiani</div>
<div class="a tx" style="left:1089.50px;top:345.00px;font-size:6.90px;color:#fff;letter-spacing:-0.766px;transform:translateX(-50%);">10%</div>
<div class="a tx" style="left:1104.60px;top:359.00px;font-size:6.90px;color:#fff;letter-spacing:-0.722px;transform:translateX(-50%);">Sensore traffico ZTL06 - Varco Corso dei Tintori</div>
<div class="a tx" style="left:1104.60px;top:370.00px;font-size:6.90px;color:#fff;letter-spacing:-0.766px;transform:translateX(-50%);">10%</div>
<div class="a tx" style="left:1089.70px;top:384.00px;font-size:6.90px;color:#fff;letter-spacing:-0.764px;transform:translateX(-50%);">Sensore traffico ZTL05 - Varco Via dell'Agnolo</div>
<div class="a tx" style="left:1089.70px;top:395.00px;font-size:6.90px;color:#fff;letter-spacing:-0.766px;transform:translateX(-50%);">10%</div>
<div class="a tx" style="left:1063.00px;top:405.00px;font-size:6.90px;color:#fff;letter-spacing:-0.741px;transform:translateX(-50%);">Sensore traffico ZTL04 - Varco L.no Vespucci</div>
<div class="a tx" style="left:1063.00px;top:415.00px;font-size:6.90px;color:#fff;letter-spacing:-0.766px;transform:translateX(-50%);">10%</div>
<div class="a tx" style="left:1037.40px;top:405.00px;font-size:6.90px;color:#fff;letter-spacing:-0.729px;transform:translateX(-50%);">Sensore traffico ZTL03 - Varco Via della Scala</div>
<div class="a tx" style="left:1037.40px;top:415.00px;font-size:6.90px;color:#fff;letter-spacing:-0.766px;transform:translateX(-50%);">10%</div>
<div class="a tx" style="left:1016.40px;top:389.00px;font-size:6.90px;color:#fff;letter-spacing:-0.746px;transform:translateX(-50%);">Sensore traffico P41 -Pratolino (Villa Demidoff) dir. Firenze</div>
<div class="a tx" style="left:1016.40px;top:400.00px;font-size:6.90px;color:#fff;letter-spacing:-0.766px;transform:translateX(-50%);">10%</div>
<div class="a tx" style="left:1008.60px;top:364.00px;font-size:6.90px;color:#fff;letter-spacing:-0.715px;transform:translateX(-50%);">Sensore traffico P36 - Vetta le Croci dir. B.go San Lorenzo</div>
<div class="a tx" style="left:1008.60px;top:375.00px;font-size:6.90px;color:#fff;letter-spacing:-0.766px;transform:translateX(-50%);">10%</div>
<div class="a tx" style="left:1016.30px;top:340.00px;font-size:6.90px;color:#fff;letter-spacing:-0.762px;transform:translateX(-50%);">Sensore traffico P17 - Osmannoro dir. Campi Bisenzio</div>
<div class="a tx" style="left:1016.30px;top:350.00px;font-size:6.90px;color:#fff;letter-spacing:-0.766px;transform:translateX(-50%);">10%</div>
<div class="a tx" style="left:1044.10px;top:319.00px;font-size:6.90px;color:#fff;letter-spacing:-0.737px;transform:translateX(-50%);">Sensore traffico P16 - San Donnino dir. Indicatore-Poggio a Caiano</div>
<div class="a tx" style="left:1044.10px;top:330.00px;font-size:6.90px;color:#fff;letter-spacing:-0.766px;transform:translateX(-50%);">10%</div>
<svg class="a" style="left:22px;top:468px" width="1153" height="202.5" viewBox="22 468 1153 202.5">
<rect x="0" y="0" width="1200" height="700" fill="#f2efe9"/>
<polygon points="89.8,559.1 120.2,562.2 150.6,565.2 162.7,569.8 158.2,592.5 147.5,616.8 141.5,635.1 141.5,669.1 135.4,669.1 136.9,635.1 129.3,610.8 111.1,598.6 95.9,580.4" fill="#f7e8d6" />
<polygon points="202.2,550.0 232.6,547.0 250.8,540.9 262.9,556.1 256.9,577.4 232.6,577.4 208.3,571.3" fill="#f7e8d6" />
<polygon points="238.6,619.9 278.1,610.8 287.2,635.1 281.2,669.1 232.6,669.1 238.6,647.2" fill="#f7e8d6" />
<polygon points="20.0,556.1 38.2,556.1 38.2,586.5 20.0,586.5" fill="#f7e8d6" />
<polygon points="190.1,507.5 214.4,504.5 232.6,519.7 217.4,534.8 196.1,531.8" fill="#f7e8d6" />
<polygon points="410.2,516.6 446.7,513.6 480.1,525.7 522.6,544.0 540.8,565.2 528.6,592.5 492.2,595.6 467.9,580.4 440.6,562.2 413.2,540.9" fill="#f7e8d6" />
<polygon points="355.6,635.1 401.1,635.1 425.4,653.3 401.1,669.1 355.6,669.1" fill="#f7e8d6" />
<polygon points="310.0,471.1 334.3,471.1 355.6,492.3 340.4,507.5 310.0,507.5" fill="#f7e8d6" opacity="0.6"/>
<polygon points="1016.7,644.2 1037.9,641.1 1037.9,669.1 1016.7,669.1" fill="#f7e8d6" />
<polygon points="29.1,525.7 65.6,522.7 80.7,534.8 86.8,553.1 56.4,556.1 32.1,553.1" fill="#e4e2df" />
<polygon points="74.7,495.4 111.1,492.3 117.2,525.7 89.8,528.8 71.6,516.6" fill="#e4e2df" />
<polygon points="111.1,519.7 156.7,525.7 159.7,556.1 120.2,556.1" fill="#e4e2df" />
<polygon points="159.7,562.2 190.1,556.1 196.1,580.4 165.8,583.4" fill="#e4e2df" />
<polygon points="184.0,501.4 232.6,498.4 256.9,513.6 232.6,534.8 190.1,531.8" fill="#e4e2df" />
<polygon points="256.9,495.4 299.4,498.4 299.4,516.6 259.9,516.6" fill="#e4e2df" />
<polygon points="250.8,644.2 287.2,644.2 287.2,669.1 250.8,669.1" fill="#e4e2df" />
<polygon points="440.6,471.1 467.9,471.1 504.4,483.2 528.6,507.5 540.8,531.8 528.6,544.0 498.3,531.8 474.0,519.7 449.7,501.4 437.5,483.2" fill="#e4e2df" />
<polygon points="528.6,531.8 552.9,537.9 574.2,556.1 595.5,580.4 610.0,592.5 610.0,622.9 583.3,622.9 568.1,604.7 540.8,586.5 528.6,565.2" fill="#e4e2df" />
<polygon points="480.1,547.0 522.6,550.0 534.7,568.2 522.6,586.5 492.2,589.5 480.1,571.3" fill="#e4e2df" />
<polygon points="474.0,598.6 522.6,595.6 583.3,604.7 589.4,629.0 559.0,641.1 522.6,622.9 480.1,622.9" fill="#e4e2df" />
<polygon points="355.6,653.3 410.2,653.3 410.2,669.1 355.6,669.1" fill="#e4e2df" />
<polygon points="401.1,471.1 437.5,471.1 437.5,486.3 401.1,486.3" fill="#e4e2df" />
<polygon points="382.9,525.7 419.3,525.7 419.3,544.0 382.9,544.0" fill="#e4e2df" />
<polygon points="410.2,562.2 443.6,562.2 443.6,577.4 410.2,577.4" fill="#e4e2df" />
<polygon points="419.3,644.2 446.7,644.2 446.7,659.4 419.3,659.4" fill="#e4e2df" />
<polygon points="600.0,580.4 624.3,580.4 642.5,598.6 660.7,610.8 660.7,629.0 642.5,635.1 618.2,635.1 600.0,629.0" fill="#e4e2df" />
<polygon points="630.4,622.9 660.7,622.9 666.8,638.1 630.4,638.1" fill="#e4e2df" />
<polygon points="23.0,592.5 38.2,585.0 53.4,577.4 65.6,578.9 80.7,585.0 92.9,592.5 111.1,598.6 129.3,610.8 136.9,635.1 135.4,659.4 120.2,669.1 23.0,669.1" fill="#d0e5c2" />
<polygon points="20.0,492.3 32.1,483.2 50.4,489.3 56.4,510.6 47.3,525.7 29.1,528.8 20.0,519.7" fill="#dbebd0" />
<polygon points="20.0,465.0 65.6,465.0 56.4,477.1 32.1,480.2 20.0,477.1" fill="#dbebd0" />
<polygon points="153.6,468.0 232.6,468.0 238.6,492.3 217.4,498.4 196.1,489.3 177.9,483.2 162.7,477.1" fill="#d0e5c2" />
<polygon points="281.2,468.0 320.0,468.0 320.0,550.0 305.5,544.0 293.3,525.7 287.2,501.4" fill="#dbebd0" />
<polygon points="141.5,522.7 162.7,516.6 184.0,525.7 190.1,544.0 177.9,556.1 150.6,553.1 138.4,537.9" fill="#dbebd0" />
<polygon points="287.2,592.5 320.0,586.5 320.0,669.1 293.3,669.1 284.2,635.1" fill="#dbebd0" />
<polygon points="165.8,577.4 196.1,574.3 214.4,592.5 202.2,598.6 171.8,595.6" fill="#dbebd0" />
<polygon points="340.4,507.5 370.7,504.5 389.0,525.7 410.2,540.9 431.5,556.1 446.7,580.4 455.8,598.6 452.7,622.9 440.6,635.1 416.3,641.1 395.0,629.0 370.7,604.7 349.5,586.5 328.2,565.2 319.1,540.9 328.2,519.7" fill="#d0e5c2" />
<polygon points="310.0,468.0 346.4,468.0 355.6,489.3 340.4,507.5 319.1,525.7 310.0,531.8" fill="#dbebd0" />
<polygon points="504.4,468.0 610.0,468.0 610.0,544.0 589.4,540.9 568.1,534.8 552.9,513.6 540.8,501.4 522.6,498.4 507.4,489.3" fill="#d0e5c2" />
<polygon points="480.1,629.0 507.4,629.0 528.6,641.1 540.8,653.3 540.8,669.1 474.0,669.1" fill="#dbebd0" />
<polygon points="310.0,601.7 340.4,598.6 370.7,622.9 385.9,647.2 355.6,659.4 310.0,653.3" fill="#dbebd0" />
<polygon points="669.8,468.0 900.0,468.0 900.0,616.8 873.3,610.8 842.9,598.6 812.6,586.5 818.6,556.1 806.5,531.8 788.3,525.7 782.2,507.5 730.6,507.5 727.5,534.8 721.5,556.1 703.2,556.1 685.0,531.8 672.9,504.5" fill="#d0e5c2" />
<polygon points="600.0,468.0 627.3,468.0 624.3,495.4 612.1,525.7 600.0,540.9" fill="#d0e5c2" />
<polygon points="669.8,598.6 697.2,592.5 721.5,607.7 742.7,622.9 745.8,647.2 730.6,669.1 672.9,669.1 666.8,635.1" fill="#d0e5c2" />
<polygon points="812.6,610.8 900.0,616.8 900.0,669.1 812.6,669.1 806.5,635.1" fill="#d0e5c2" />
<polygon points="691.1,556.1 721.5,562.2 733.6,592.5 715.4,598.6 691.1,586.5" fill="#dbebd0" />
<polygon points="757.9,610.8 794.4,607.7 800.4,647.2 770.1,659.4 751.8,635.1" fill="#dbebd0" />
<polygon points="880.0,468.0 1013.6,468.0 1013.6,504.5 1031.8,504.5 1044.0,525.7 1071.3,510.6 1092.6,537.9 1113.8,536.4 1113.8,592.5 1092.6,592.5 1086.5,610.8 1068.3,622.9 1050.1,613.8 1037.9,598.6 980.2,598.6 971.1,607.7 952.9,592.5 940.7,580.4 925.6,568.2 898.2,556.1 880.0,547.0" fill="#d0e5c2" />
<polygon points="880.0,586.5 898.2,595.6 925.6,607.7 949.8,629.0 971.1,653.3 980.2,669.1 880.0,669.1" fill="#d0e5c2" />
<polygon points="1056.1,622.9 1086.5,616.8 1098.6,635.1 1119.9,662.4 1110.8,669.1 1062.2,669.1" fill="#d0e5c2" />
<polygon points="1122.9,641.1 1147.2,635.1 1165.5,647.2 1159.4,665.4 1129.0,665.4" fill="#cde8c4" />
<polygon points="1077.4,510.6 1092.6,510.6 1110.8,522.7 1104.7,531.8 1086.5,528.8" fill="#dbebd0" />
<polygon points="925.6,580.4 952.9,586.5 952.9,607.7 928.6,604.7" fill="#ebeae3" />
<polygon points="165,671 167.4,624.6 184.3,610 203.6,595.6 227.8,588.3 237.5,578.6 256.8,578.6 271.3,581 283.4,605.3 281,610 261.7,610 247.2,615 242.3,629.4 232.6,639.1 237.5,658.4 223,671" fill="#cfe4c0"/>
<polyline points="165,671 167.4,624.6 184.3,610 203.6,595.6 227.8,588.3 237.5,578.6 256.8,578.6 271.3,581 283.4,605.3" fill="none" stroke="#8cc07c" stroke-width="1.5"/>
<polyline points="283.4,605.3 281,610 261.7,610 247.2,615 242.3,629.4 232.6,639.1 237.5,658.4 223,671" fill="none" stroke="#8cc07c" stroke-width="1.5"/>
<g fill="#d3e7c6"><ellipse cx="44.8" cy="521.1" rx="4.5" ry="2.3" transform="rotate(55 44.8 521.1)"/><ellipse cx="158.6" cy="504.5" rx="5.9" ry="1.6" transform="rotate(135 158.6 504.5)"/><ellipse cx="54.6" cy="468.2" rx="3.5" ry="2.5" transform="rotate(17 54.6 468.2)"/><ellipse cx="42.0" cy="525.9" rx="5.7" ry="2.8" transform="rotate(111 42.0 525.9)"/><ellipse cx="159.7" cy="524.9" rx="5.5" ry="2.6" transform="rotate(8 159.7 524.9)"/><ellipse cx="154.0" cy="509.6" rx="4.8" ry="2.7" transform="rotate(94 154.0 509.6)"/><ellipse cx="25.2" cy="525.1" rx="2.4" ry="3.1" transform="rotate(5 25.2 525.1)"/><ellipse cx="84.5" cy="510.5" rx="3.4" ry="2.3" transform="rotate(47 84.5 510.5)"/><ellipse cx="113.8" cy="504.2" rx="5.3" ry="1.4" transform="rotate(50 113.8 504.2)"/><ellipse cx="50.8" cy="542.6" rx="5.6" ry="2.9" transform="rotate(148 50.8 542.6)"/><ellipse cx="158.5" cy="473.5" rx="4.2" ry="2.5" transform="rotate(99 158.5 473.5)"/><ellipse cx="49.7" cy="539.1" rx="5.6" ry="2.1" transform="rotate(93 49.7 539.1)"/><ellipse cx="153.7" cy="506.6" rx="3.3" ry="2.3" transform="rotate(68 153.7 506.6)"/><ellipse cx="25.7" cy="475.2" rx="4.9" ry="3.5" transform="rotate(126 25.7 475.2)"/><ellipse cx="22.4" cy="473.4" rx="4.4" ry="2.4" transform="rotate(146 22.4 473.4)"/><ellipse cx="106.0" cy="510.8" rx="4.5" ry="1.6" transform="rotate(43 106.0 510.8)"/><ellipse cx="108.5" cy="532.2" rx="3.3" ry="3.0" transform="rotate(78 108.5 532.2)"/><ellipse cx="55.9" cy="481.0" rx="5.7" ry="1.6" transform="rotate(109 55.9 481.0)"/><ellipse cx="73.7" cy="520.6" rx="4.7" ry="3.3" transform="rotate(61 73.7 520.6)"/><ellipse cx="78.2" cy="544.2" rx="5.8" ry="2.6" transform="rotate(88 78.2 544.2)"/><ellipse cx="89.7" cy="496.9" rx="3.0" ry="3.2" transform="rotate(41 89.7 496.9)"/><ellipse cx="99.5" cy="501.8" rx="3.6" ry="2.9" transform="rotate(14 99.5 501.8)"/><ellipse cx="137.5" cy="472.0" rx="3.0" ry="1.9" transform="rotate(107 137.5 472.0)"/><ellipse cx="56.3" cy="498.4" rx="5.5" ry="2.7" transform="rotate(37 56.3 498.4)"/><ellipse cx="157.7" cy="525.4" rx="3.9" ry="1.8" transform="rotate(166 157.7 525.4)"/><ellipse cx="94.5" cy="524.1" rx="2.1" ry="1.7" transform="rotate(93 94.5 524.1)"/><ellipse cx="131.7" cy="535.9" rx="4.4" ry="2.2" transform="rotate(148 131.7 535.9)"/><ellipse cx="146.6" cy="504.7" rx="2.6" ry="2.6" transform="rotate(35 146.6 504.7)"/><ellipse cx="259.9" cy="468.7" rx="4.7" ry="3.4" transform="rotate(6 259.9 468.7)"/><ellipse cx="194.4" cy="491.5" rx="3.0" ry="3.4" transform="rotate(107 194.4 491.5)"/><ellipse cx="193.4" cy="497.2" rx="5.8" ry="3.3" transform="rotate(34 193.4 497.2)"/><ellipse cx="178.5" cy="496.6" rx="2.7" ry="2.7" transform="rotate(36 178.5 496.6)"/><ellipse cx="169.3" cy="476.6" rx="3.1" ry="1.9" transform="rotate(83 169.3 476.6)"/><ellipse cx="211.5" cy="531.9" rx="4.5" ry="1.6" transform="rotate(96 211.5 531.9)"/><ellipse cx="186.2" cy="521.6" rx="5.0" ry="2.6" transform="rotate(129 186.2 521.6)"/><ellipse cx="273.6" cy="523.7" rx="5.2" ry="1.2" transform="rotate(118 273.6 523.7)"/><ellipse cx="272.4" cy="496.7" rx="4.3" ry="3.2" transform="rotate(59 272.4 496.7)"/><ellipse cx="192.9" cy="518.2" rx="3.3" ry="1.3" transform="rotate(99 192.9 518.2)"/><ellipse cx="180.3" cy="520.3" rx="6.0" ry="3.1" transform="rotate(140 180.3 520.3)"/><ellipse cx="223.7" cy="509.3" rx="4.2" ry="1.3" transform="rotate(152 223.7 509.3)"/><ellipse cx="255.5" cy="537.6" rx="3.2" ry="2.8" transform="rotate(134 255.5 537.6)"/><ellipse cx="258.5" cy="481.6" rx="4.5" ry="1.9" transform="rotate(51 258.5 481.6)"/><ellipse cx="206.2" cy="490.9" rx="6.0" ry="1.4" transform="rotate(19 206.2 490.9)"/><ellipse cx="244.7" cy="513.1" rx="5.2" ry="3.4" transform="rotate(129 244.7 513.1)"/><ellipse cx="240.8" cy="469.4" rx="4.6" ry="2.2" transform="rotate(132 240.8 469.4)"/><ellipse cx="226.7" cy="531.0" rx="2.3" ry="1.3" transform="rotate(169 226.7 531.0)"/><ellipse cx="216.4" cy="485.8" rx="4.8" ry="3.1" transform="rotate(109 216.4 485.8)"/><ellipse cx="219.3" cy="485.0" rx="3.5" ry="2.3" transform="rotate(161 219.3 485.0)"/><ellipse cx="278.9" cy="515.1" rx="2.1" ry="1.6" transform="rotate(95 278.9 515.1)"/><ellipse cx="253.2" cy="532.1" rx="5.1" ry="2.6" transform="rotate(158 253.2 532.1)"/><ellipse cx="380.2" cy="660.4" rx="4.8" ry="2.8" transform="rotate(62 380.2 660.4)"/><ellipse cx="357.7" cy="630.9" rx="3.2" ry="2.1" transform="rotate(134 357.7 630.9)"/><ellipse cx="415.6" cy="671.1" rx="2.0" ry="1.9" transform="rotate(79 415.6 671.1)"/><ellipse cx="405.1" cy="648.7" rx="2.4" ry="1.6" transform="rotate(133 405.1 648.7)"/><ellipse cx="336.3" cy="667.4" rx="5.0" ry="2.3" transform="rotate(27 336.3 667.4)"/><ellipse cx="418.9" cy="603.6" rx="3.7" ry="2.8" transform="rotate(95 418.9 603.6)"/><ellipse cx="377.0" cy="645.9" rx="3.0" ry="3.4" transform="rotate(82 377.0 645.9)"/><ellipse cx="361.8" cy="667.5" rx="5.9" ry="3.3" transform="rotate(129 361.8 667.5)"/><ellipse cx="324.0" cy="639.0" rx="3.1" ry="2.1" transform="rotate(100 324.0 639.0)"/><ellipse cx="356.0" cy="625.8" rx="4.5" ry="1.8" transform="rotate(44 356.0 625.8)"/><ellipse cx="380.1" cy="641.0" rx="2.4" ry="3.4" transform="rotate(55 380.1 641.0)"/><ellipse cx="304.1" cy="656.5" rx="5.7" ry="2.8" transform="rotate(4 304.1 656.5)"/><ellipse cx="309.0" cy="637.6" rx="3.6" ry="2.2" transform="rotate(115 309.0 637.6)"/><ellipse cx="328.8" cy="590.6" rx="4.2" ry="1.4" transform="rotate(79 328.8 590.6)"/><ellipse cx="322.8" cy="620.4" rx="2.0" ry="1.6" transform="rotate(146 322.8 620.4)"/><ellipse cx="395.0" cy="657.4" rx="4.1" ry="1.3" transform="rotate(48 395.0 657.4)"/><ellipse cx="350.1" cy="662.4" rx="3.0" ry="2.5" transform="rotate(149 350.1 662.4)"/><ellipse cx="411.0" cy="662.5" rx="2.1" ry="2.5" transform="rotate(20 411.0 662.5)"/><ellipse cx="352.3" cy="658.3" rx="6.0" ry="2.7" transform="rotate(38 352.3 658.3)"/><ellipse cx="307.2" cy="656.8" rx="4.4" ry="2.6" transform="rotate(120 307.2 656.8)"/><ellipse cx="381.5" cy="645.4" rx="2.6" ry="1.6" transform="rotate(73 381.5 645.4)"/><ellipse cx="335.8" cy="641.4" rx="5.6" ry="1.4" transform="rotate(17 335.8 641.4)"/><ellipse cx="322.4" cy="598.0" rx="5.3" ry="2.0" transform="rotate(90 322.4 598.0)"/><ellipse cx="307.1" cy="593.0" rx="4.0" ry="2.8" transform="rotate(167 307.1 593.0)"/><ellipse cx="347.9" cy="592.7" rx="2.9" ry="2.0" transform="rotate(64 347.9 592.7)"/><ellipse cx="349.0" cy="646.7" rx="4.9" ry="2.4" transform="rotate(20 349.0 646.7)"/><ellipse cx="339.0" cy="608.0" rx="4.0" ry="2.9" transform="rotate(155 339.0 608.0)"/><ellipse cx="363.9" cy="641.5" rx="2.7" ry="2.8" transform="rotate(126 363.9 641.5)"/><ellipse cx="357.4" cy="660.9" rx="3.8" ry="1.2" transform="rotate(71 357.4 660.9)"/><ellipse cx="381.5" cy="607.8" rx="5.1" ry="3.3" transform="rotate(136 381.5 607.8)"/><ellipse cx="648.3" cy="528.9" rx="3.2" ry="1.7" transform="rotate(118 648.3 528.9)"/><ellipse cx="674.9" cy="583.5" rx="2.0" ry="2.0" transform="rotate(157 674.9 583.5)"/><ellipse cx="621.2" cy="522.0" rx="3.5" ry="2.9" transform="rotate(46 621.2 522.0)"/><ellipse cx="674.5" cy="562.9" rx="5.5" ry="1.7" transform="rotate(131 674.5 562.9)"/><ellipse cx="644.4" cy="582.0" rx="5.0" ry="3.2" transform="rotate(92 644.4 582.0)"/><ellipse cx="672.8" cy="539.2" rx="4.4" ry="2.0" transform="rotate(171 672.8 539.2)"/><ellipse cx="665.2" cy="549.0" rx="2.5" ry="1.3" transform="rotate(108 665.2 549.0)"/><ellipse cx="676.4" cy="580.4" rx="5.9" ry="2.9" transform="rotate(27 676.4 580.4)"/><ellipse cx="617.0" cy="562.6" rx="3.5" ry="3.5" transform="rotate(75 617.0 562.6)"/><ellipse cx="609.8" cy="539.2" rx="3.7" ry="2.7" transform="rotate(126 609.8 539.2)"/><ellipse cx="660.1" cy="572.1" rx="3.0" ry="2.2" transform="rotate(96 660.1 572.1)"/><ellipse cx="617.8" cy="558.2" rx="2.2" ry="3.2" transform="rotate(52 617.8 558.2)"/><ellipse cx="602.8" cy="585.8" rx="4.3" ry="3.0" transform="rotate(35 602.8 585.8)"/><ellipse cx="658.5" cy="599.5" rx="3.5" ry="2.1" transform="rotate(0 658.5 599.5)"/><ellipse cx="662.2" cy="589.3" rx="3.2" ry="3.1" transform="rotate(117 662.2 589.3)"/><ellipse cx="615.8" cy="538.2" rx="4.9" ry="3.1" transform="rotate(123 615.8 538.2)"/><ellipse cx="653.8" cy="522.2" rx="5.7" ry="1.5" transform="rotate(85 653.8 522.2)"/><ellipse cx="636.9" cy="551.2" rx="4.5" ry="2.6" transform="rotate(177 636.9 551.2)"/><ellipse cx="605.7" cy="540.5" rx="2.4" ry="2.7" transform="rotate(117 605.7 540.5)"/><ellipse cx="663.4" cy="594.3" rx="2.8" ry="3.1" transform="rotate(19 663.4 594.3)"/><ellipse cx="747.1" cy="610.4" rx="2.5" ry="2.9" transform="rotate(67 747.1 610.4)"/><ellipse cx="689.4" cy="640.6" rx="4.6" ry="2.4" transform="rotate(34 689.4 640.6)"/><ellipse cx="724.8" cy="648.5" rx="2.9" ry="2.8" transform="rotate(85 724.8 648.5)"/><ellipse cx="762.9" cy="632.9" rx="2.0" ry="3.1" transform="rotate(72 762.9 632.9)"/><ellipse cx="685.2" cy="647.1" rx="3.7" ry="1.5" transform="rotate(154 685.2 647.1)"/><ellipse cx="738.9" cy="591.7" rx="4.9" ry="2.6" transform="rotate(113 738.9 591.7)"/><ellipse cx="723.9" cy="634.1" rx="4.2" ry="2.2" transform="rotate(5 723.9 634.1)"/><ellipse cx="737.2" cy="620.0" rx="3.4" ry="2.9" transform="rotate(162 737.2 620.0)"/><ellipse cx="738.3" cy="649.0" rx="4.3" ry="2.2" transform="rotate(59 738.3 649.0)"/><ellipse cx="681.8" cy="642.7" rx="3.8" ry="1.7" transform="rotate(150 681.8 642.7)"/><ellipse cx="761.2" cy="651.4" rx="3.4" ry="1.6" transform="rotate(3 761.2 651.4)"/><ellipse cx="751.9" cy="616.8" rx="3.3" ry="1.7" transform="rotate(12 751.9 616.8)"/><ellipse cx="721.1" cy="606.6" rx="2.0" ry="1.6" transform="rotate(39 721.1 606.6)"/><ellipse cx="699.9" cy="599.2" rx="4.1" ry="1.5" transform="rotate(103 699.9 599.2)"/><ellipse cx="691.0" cy="600.2" rx="4.8" ry="1.7" transform="rotate(4 691.0 600.2)"/><ellipse cx="687.6" cy="609.9" rx="4.4" ry="1.4" transform="rotate(52 687.6 609.9)"/><ellipse cx="718.9" cy="654.7" rx="5.7" ry="2.8" transform="rotate(2 718.9 654.7)"/><ellipse cx="716.0" cy="668.7" rx="5.2" ry="2.8" transform="rotate(106 716.0 668.7)"/><ellipse cx="683.1" cy="630.9" rx="5.6" ry="3.0" transform="rotate(148 683.1 630.9)"/><ellipse cx="723.4" cy="593.1" rx="4.6" ry="3.0" transform="rotate(65 723.4 593.1)"/><ellipse cx="1058.7" cy="651.8" rx="4.1" ry="1.6" transform="rotate(87 1058.7 651.8)"/><ellipse cx="1020.3" cy="635.4" rx="3.1" ry="3.3" transform="rotate(75 1020.3 635.4)"/><ellipse cx="990.1" cy="620.7" rx="2.4" ry="1.9" transform="rotate(35 990.1 620.7)"/><ellipse cx="1056.6" cy="610.8" rx="3.2" ry="1.5" transform="rotate(169 1056.6 610.8)"/><ellipse cx="1049.3" cy="665.3" rx="2.2" ry="2.9" transform="rotate(108 1049.3 665.3)"/><ellipse cx="1033.7" cy="607.7" rx="5.9" ry="1.7" transform="rotate(93 1033.7 607.7)"/><ellipse cx="1053.9" cy="603.4" rx="4.5" ry="2.6" transform="rotate(111 1053.9 603.4)"/><ellipse cx="1002.7" cy="665.8" rx="3.7" ry="1.7" transform="rotate(8 1002.7 665.8)"/><ellipse cx="1005.7" cy="611.9" rx="5.9" ry="1.2" transform="rotate(59 1005.7 611.9)"/><ellipse cx="1065.8" cy="669.4" rx="3.0" ry="2.0" transform="rotate(96 1065.8 669.4)"/><ellipse cx="1003.0" cy="650.5" rx="5.6" ry="1.6" transform="rotate(94 1003.0 650.5)"/><ellipse cx="1030.6" cy="623.7" rx="5.6" ry="3.1" transform="rotate(37 1030.6 623.7)"/><ellipse cx="1012.3" cy="654.0" rx="4.8" ry="2.9" transform="rotate(20 1012.3 654.0)"/><ellipse cx="1068.5" cy="617.7" rx="6.0" ry="2.0" transform="rotate(97 1068.5 617.7)"/><ellipse cx="502.1" cy="656.4" rx="4.9" ry="1.3" transform="rotate(147 502.1 656.4)"/><ellipse cx="447.3" cy="619.2" rx="5.2" ry="2.6" transform="rotate(59 447.3 619.2)"/><ellipse cx="499.0" cy="662.8" rx="5.6" ry="3.1" transform="rotate(48 499.0 662.8)"/><ellipse cx="469.9" cy="650.5" rx="4.1" ry="3.4" transform="rotate(167 469.9 650.5)"/><ellipse cx="510.2" cy="627.4" rx="5.7" ry="3.0" transform="rotate(132 510.2 627.4)"/><ellipse cx="458.6" cy="609.9" rx="2.0" ry="1.4" transform="rotate(116 458.6 609.9)"/><ellipse cx="431.1" cy="634.1" rx="2.3" ry="2.0" transform="rotate(45 431.1 634.1)"/><ellipse cx="471.0" cy="621.3" rx="3.8" ry="2.8" transform="rotate(105 471.0 621.3)"/><ellipse cx="496.7" cy="668.5" rx="4.2" ry="1.8" transform="rotate(1 496.7 668.5)"/><ellipse cx="490.2" cy="660.1" rx="5.9" ry="1.8" transform="rotate(160 490.2 660.1)"/><ellipse cx="510.8" cy="663.5" rx="3.1" ry="2.0" transform="rotate(135 510.8 663.5)"/><ellipse cx="454.5" cy="667.4" rx="3.4" ry="2.7" transform="rotate(23 454.5 667.4)"/><ellipse cx="447.9" cy="656.4" rx="2.0" ry="2.0" transform="rotate(42 447.9 656.4)"/><ellipse cx="498.9" cy="649.9" rx="4.0" ry="1.3" transform="rotate(7 498.9 649.9)"/><ellipse cx="437.3" cy="641.3" rx="4.2" ry="3.2" transform="rotate(82 437.3 641.3)"/><ellipse cx="482.2" cy="612.2" rx="5.0" ry="1.4" transform="rotate(78 482.2 612.2)"/></g>
<polygon points="22,641 35,652 50,662 64,671 22,671" fill="#f7e8d6"/>
<polyline points="22.0,641.0 35.0,652.0 50.0,662.0 64.0,671.0" fill="none" stroke="#c9c6c2" stroke-width="0.9" stroke-linejoin="round" stroke-linecap="round" />
<polygon points="226.5,559.1 253.8,537.9 269.0,544.0 281.2,556.1 284.2,586.5 281.2,610.8 269.0,598.6 250.8,586.5 232.6,577.4" fill="#d7ecdc" />
<g stroke="#7fb8dc" stroke-width="0.8" opacity="0.9">
<line x1="241.8" y1="577.0" x2="244.3" y2="577.0"/>
<line x1="248.6" y1="580.6" x2="251.1" y2="580.6"/>
<line x1="261.8" y1="547.9" x2="264.3" y2="547.9"/>
<line x1="230.2" y1="594.8" x2="232.7" y2="594.8"/>
<line x1="242.9" y1="558.2" x2="245.4" y2="558.2"/>
<line x1="280.9" y1="572.5" x2="283.4" y2="572.5"/>
<line x1="272.7" y1="572.9" x2="275.2" y2="572.9"/>
<line x1="262.5" y1="553.1" x2="265.0" y2="553.1"/>
<line x1="262.3" y1="596.7" x2="264.8" y2="596.7"/>
<line x1="256.5" y1="589.0" x2="259.0" y2="589.0"/>
<line x1="264.2" y1="547.8" x2="266.7" y2="547.8"/>
<line x1="268.7" y1="579.9" x2="271.2" y2="579.9"/>
<line x1="245.1" y1="545.8" x2="247.6" y2="545.8"/>
<line x1="274.2" y1="572.7" x2="276.7" y2="572.7"/>
<line x1="266.6" y1="597.3" x2="269.1" y2="597.3"/>
<line x1="266.4" y1="599.9" x2="268.9" y2="599.9"/>
<line x1="249.9" y1="592.6" x2="252.4" y2="592.6"/>
<line x1="252.5" y1="600.8" x2="255.0" y2="600.8"/>
<line x1="274.9" y1="549.9" x2="277.4" y2="549.9"/>
<line x1="236.6" y1="557.1" x2="239.1" y2="557.1"/>
<line x1="279.4" y1="570.4" x2="281.9" y2="570.4"/>
<line x1="261.9" y1="562.2" x2="264.4" y2="562.2"/>
<line x1="255.7" y1="567.4" x2="258.2" y2="567.4"/>
<line x1="247.7" y1="579.5" x2="250.2" y2="579.5"/>
<line x1="259.7" y1="598.9" x2="262.2" y2="598.9"/>
<line x1="264.7" y1="600.4" x2="267.2" y2="600.4"/>
<line x1="273.7" y1="604.1" x2="276.2" y2="604.1"/>
<line x1="264.2" y1="553.9" x2="266.7" y2="553.9"/>
<line x1="274.0" y1="602.5" x2="276.5" y2="602.5"/>
<line x1="276.2" y1="578.5" x2="278.7" y2="578.5"/>
<line x1="266.4" y1="556.8" x2="268.9" y2="556.8"/>
<line x1="272.5" y1="578.8" x2="275.0" y2="578.8"/>
<line x1="244.2" y1="547.8" x2="246.7" y2="547.8"/>
<line x1="273.6" y1="604.1" x2="276.1" y2="604.1"/>
<line x1="234.1" y1="592.6" x2="236.6" y2="592.6"/>
<line x1="250.7" y1="553.1" x2="253.2" y2="553.1"/>
<line x1="244.7" y1="590.6" x2="247.2" y2="590.6"/>
<line x1="274.6" y1="546.6" x2="277.1" y2="546.6"/>
<line x1="261.3" y1="546.7" x2="263.8" y2="546.7"/>
<line x1="266.6" y1="564.1" x2="269.1" y2="564.1"/>
</g>
<polyline points="340.4,468.0 370.7,483.2 401.1,495.4 425.4,525.7 440.6,550.0 461.8,577.4 467.9,601.7" fill="none" stroke="#a8cfe0" stroke-width="1.3" stroke-linejoin="round" stroke-linecap="round" />
<polyline points="437.5,619.9 452.7,610.8 467.9,601.7 489.2,604.7 504.4,598.6 540.8,592.5 583.3,598.6 610.0,601.7" fill="none" stroke="#a8cfe0" stroke-width="1.3" stroke-linejoin="round" stroke-linecap="round" />
<polyline points="310.0,662.4 340.4,659.4 370.7,647.2 401.1,647.2 431.5,635.1 437.5,619.9" fill="none" stroke="#a8cfe0" stroke-width="1.3" stroke-linejoin="round" stroke-linecap="round" />
<polyline points="600.0,616.8 624.3,615.3 660.7,613.8 682.0,601.7 706.3,592.5 727.5,607.7 751.8,610.8 757.9,622.9 760.9,635.1 757.9,659.4 754.9,669.1" fill="none" stroke="#a8cfe0" stroke-width="1.3" stroke-linejoin="round" stroke-linecap="round" />
<polyline points="751.8,610.8 751.8,592.5 764.0,586.5 779.2,556.1 794.4,531.8 806.5,501.4 797.4,483.2 788.3,468.0" fill="none" stroke="#a8cfe0" stroke-width="1.3" stroke-linejoin="round" stroke-linecap="round" />
<polyline points="880.0,531.8 895.2,531.8 916.4,562.2 937.7,580.4 949.8,598.6 959.0,629.0 980.2,653.3 989.3,669.1" fill="none" stroke="#a8cfe0" stroke-width="1.3" stroke-linejoin="round" stroke-linecap="round" />
<polyline points="1074.4,471.1 1080.4,483.2 1074.4,504.5 1074.4,540.9" fill="none" stroke="#a8cfe0" stroke-width="1.3" stroke-linejoin="round" stroke-linecap="round" />
<polyline points="1025.8,504.5 1031.8,516.6 1034.9,531.8" fill="none" stroke="#a8cfe0" stroke-width="1.3" stroke-linejoin="round" stroke-linecap="round" />
<polyline points="1138.1,635.1 1147.2,616.8 1153.3,592.5 1168.5,580.4" fill="none" stroke="#a8cfe0" stroke-width="1.3" stroke-linejoin="round" stroke-linecap="round" />
<polyline points="22.0,528.0 50.0,526.7 68.0,508.0 73.0,490.0 75.0,468.0" fill="none" stroke="#a8cfe0" stroke-width="1.3" stroke-linejoin="round" stroke-linecap="round" />
<polyline points="73.3,468.0 70.0,490.0 65.0,520.0 60.0,543.0" fill="none" stroke="#8a8a8a" stroke-width="1.0" stroke-linejoin="round" stroke-linecap="round" />
<polyline points="226.5,559.1 253.8,537.9 269.0,544.0 281.2,556.1 284.2,586.5 281.2,610.8 269.0,598.6 250.8,586.5 232.6,577.4 226.5,559.1" fill="none" stroke="#8cc07c" stroke-width="1.5" stroke-linejoin="round" stroke-linecap="round" />
<polyline points="880.0,483.2 898.2,486.3 916.4,495.4 922.5,489.3" fill="none" stroke="#8cc07c" stroke-width="1.5" stroke-linejoin="round" stroke-linecap="round" />
<polyline points="880.0,504.5 889.1,516.6 898.2,528.8 919.5,525.7 934.7,540.9 943.8,556.1 949.8,571.3 968.1,571.3 977.2,583.4 980.2,598.6 971.1,607.7 980.2,610.8 1001.5,622.9 1022.7,629.0 1047.0,629.0 1053.1,647.2 1089.5,662.4 1098.6,669.1" fill="none" stroke="#8cc07c" stroke-width="1.5" stroke-linejoin="round" stroke-linecap="round" />
<polyline points="995.4,483.2 1004.5,489.3 1022.7,492.3 1034.9,501.4 1040.9,525.7 1068.3,510.6 1092.6,537.9 1092.6,565.2 1086.5,586.5 1089.5,610.8 1098.6,635.1 1110.8,656.3 1119.9,662.4 1116.9,669.1" fill="none" stroke="#8cc07c" stroke-width="1.5" stroke-linejoin="round" stroke-linecap="round" />
<polyline points="870.8,483.3 875.0,481.7 880.0,485.0" fill="none" stroke="#8cc07c" stroke-width="1.5" stroke-linejoin="round" stroke-linecap="round" />
<polyline points="870.8,483.3 871.7,488.3 876.7,500.0 880.0,504.5" fill="none" stroke="#8cc07c" stroke-width="1.5" stroke-linejoin="round" stroke-linecap="round" />
<polyline points="156.7,468.0 165.8,501.4 174.9,513.6 184.0,531.8 190.1,550.0 187.0,565.2 196.1,580.4 205.2,592.5 217.4,607.7 232.6,622.9 250.8,635.1 262.9,647.2" fill="none" stroke="#b88ccc" stroke-width="1.3" stroke-linejoin="round" stroke-linecap="round" stroke-dasharray="1.2 2"/>
<polyline points="23.0,616.8 50.4,629.0 68.6,622.9 86.8,630.5 108.1,625.9 135.4,629.0 147.5,622.9 159.7,595.6 165.8,577.4" fill="none" stroke="#b88ccc" stroke-width="1.3" stroke-linejoin="round" stroke-linecap="round" stroke-dasharray="1.2 2"/>
<polyline points="299.4,583.4 320.0,580.4" fill="none" stroke="#b88ccc" stroke-width="1.3" stroke-linejoin="round" stroke-linecap="round" stroke-dasharray="1.2 2"/>
<polyline points="431.5,483.2 428.4,510.6 431.5,544.0 410.2,565.2 379.8,562.2 355.6,574.3 310.0,589.5" fill="none" stroke="#b88ccc" stroke-width="1.3" stroke-linejoin="round" stroke-linecap="round" stroke-dasharray="1.2 2"/>
<polyline points="498.3,553.1 483.1,562.2 461.8,562.2 455.8,592.5 437.5,610.8 437.5,622.9" fill="none" stroke="#b88ccc" stroke-width="1.3" stroke-linejoin="round" stroke-linecap="round" stroke-dasharray="1.2 2"/>
<polyline points="940.7,507.5 959.0,519.7 977.2,528.8 995.4,537.9 1010.6,556.1 1031.8,571.3 1050.1,568.2 1071.3,571.3 1086.5,574.3 1092.6,586.5 1110.8,592.5 1119.9,607.7 1141.2,621.4 1174.0,622.9" fill="none" stroke="#b88ccc" stroke-width="1.3" stroke-linejoin="round" stroke-linecap="round" stroke-dasharray="1.2 2"/>
<polyline points="940.0,468.0 938.3,490.0 936.7,503.3 926.7,508.3 913.3,505.0 906.7,505.0 900.0,513.3 896.7,531.7 893.3,541.7 885.0,536.7 878.3,545.0 875.0,565.0" fill="none" stroke="#b88ccc" stroke-width="1.3" stroke-linejoin="round" stroke-linecap="round" stroke-dasharray="1.2 2"/>
<polyline points="875.0,566.7 861.7,578.3 859.2,593.3 854.2,606.7 846.7,615.0 844.2,621.7 848.3,635.0 841.7,648.3 840.0,661.7 853.3,670.0" fill="none" stroke="#b88ccc" stroke-width="1.3" stroke-linejoin="round" stroke-linecap="round" stroke-dasharray="1.2 2"/>
<polyline points="835.0,618.3 843.3,617.5 846.7,625.0 849.2,636.7 843.3,645.0 838.3,653.3 833.3,661.7 821.7,660.0 815.0,655.0 808.3,641.7 811.7,636.7 821.7,628.3 830.0,623.3 835.0,618.3" fill="none" stroke="#8cc07c" stroke-width="1.5" stroke-linejoin="round" stroke-linecap="round" />
<polyline points="59.5,537.9 68.6,528.8 99.0,522.7 141.5,516.6 156.7,504.5 165.8,489.3 177.9,483.2 202.2,495.4 232.6,495.4 259.9,504.5" fill="none" stroke="#f5c99a" stroke-width="1.25" stroke-linejoin="round" stroke-linecap="round" />
<polyline points="74.7,468.0 71.6,495.4 62.5,522.7 56.4,537.9 44.3,556.1 38.2,580.4 32.1,607.7 23.0,647.2" fill="none" stroke="#f5c99a" stroke-width="1.25" stroke-linejoin="round" stroke-linecap="round" />
<polyline points="89.8,556.1 99.0,580.4 111.1,598.6 129.3,610.8 138.4,635.1 135.4,669.1" fill="none" stroke="#f5c99a" stroke-width="1.25" stroke-linejoin="round" stroke-linecap="round" />
<polyline points="278.1,504.5 281.2,540.9 293.3,565.2 296.3,592.5 287.2,622.9 278.1,647.2 269.0,669.1" fill="none" stroke="#f5c99a" stroke-width="1.25" stroke-linejoin="round" stroke-linecap="round" />
<polyline points="23.0,537.9 38.2,539.4 59.5,537.9" fill="none" stroke="#f5c99a" stroke-width="1.25" stroke-linejoin="round" stroke-linecap="round" />
<polyline points="373.8,469.6 395.0,501.4 425.4,531.8 452.7,562.2 467.9,568.2 507.4,577.4 540.8,589.5 574.2,592.5 598.5,598.6" fill="none" stroke="#f5c99a" stroke-width="1.25" stroke-linejoin="round" stroke-linecap="round" />
<polyline points="431.5,492.3 467.9,501.4 504.4,525.7 528.6,534.8" fill="none" stroke="#f5c99a" stroke-width="1.25" stroke-linejoin="round" stroke-linecap="round" />
<polyline points="477.0,613.8 507.4,610.8 534.7,609.2 583.3,607.7 610.0,604.7" fill="none" stroke="#f5c99a" stroke-width="1.25" stroke-linejoin="round" stroke-linecap="round" />
<polyline points="467.9,468.0 452.7,489.3 437.5,510.6 425.4,531.8" fill="none" stroke="#f5c99a" stroke-width="1.25" stroke-linejoin="round" stroke-linecap="round" />
<polyline points="624.3,468.0 628.8,495.4 631.9,513.6 630.4,534.8 624.3,556.1 618.2,580.4 612.1,595.6" fill="none" stroke="#f5c99a" stroke-width="1.25" stroke-linejoin="round" stroke-linecap="round" />
<polyline points="677.4,468.0 679.0,486.3 669.8,504.5 660.7,525.7 645.6,550.0 630.4,568.2 618.2,586.5" fill="none" stroke="#f5c99a" stroke-width="1.25" stroke-linejoin="round" stroke-linecap="round" />
<polyline points="788.3,468.0 797.4,486.3 806.5,501.4 803.5,525.7 785.2,537.9 776.1,556.1 764.0,580.4 751.8,598.6 757.9,613.8 760.9,635.1 757.9,659.4 754.9,669.1" fill="none" stroke="#f5c99a" stroke-width="1.25" stroke-linejoin="round" stroke-linecap="round" />
<polyline points="765.5,607.7 782.2,598.6 812.6,586.5 852.0,601.7 873.3,595.6 900.0,598.6" fill="none" stroke="#f5c99a" stroke-width="1.25" stroke-linejoin="round" stroke-linecap="round" />
<polyline points="827.8,468.0 812.6,483.2 797.4,486.3" fill="none" stroke="#f5c99a" stroke-width="1.25" stroke-linejoin="round" stroke-linecap="round" />
<polyline points="639.5,616.8 630.4,641.1 624.3,653.3 600.0,659.4" fill="none" stroke="#f5c99a" stroke-width="1.25" stroke-linejoin="round" stroke-linecap="round" />
<polyline points="880.0,595.6 904.3,601.7 925.6,607.7 940.7,616.8 952.9,635.1 968.1,650.2 983.2,662.4 989.3,669.1" fill="none" stroke="#f5c99a" stroke-width="1.25" stroke-linejoin="round" stroke-linecap="round" />
<polyline points="968.1,471.1 980.2,486.3 965.0,504.5 962.0,525.7 968.1,547.0 952.9,562.2 940.7,571.3 937.7,580.4" fill="none" stroke="#f5c99a" stroke-width="1.25" stroke-linejoin="round" stroke-linecap="round" />
<polyline points="1031.8,469.6 995.4,474.1 983.2,483.2" fill="none" stroke="#f5c99a" stroke-width="1.25" stroke-linejoin="round" stroke-linecap="round" />
<polyline points="1013.6,669.1 1016.7,647.2 1028.8,629.0 1044.0,613.8 1062.2,592.5 1089.5,583.4 1098.6,574.3 1119.9,556.1 1132.0,537.9 1138.1,513.6" fill="none" stroke="#f5c99a" stroke-width="1.25" stroke-linejoin="round" stroke-linecap="round" />
<polyline points="1174.0,493.8 1153.3,498.4 1138.1,510.6 1135.1,534.8 1122.9,556.1 1129.0,574.3 1153.3,592.5 1174.0,616.8" fill="none" stroke="#eb8a70" stroke-width="1.6" stroke-linejoin="round" stroke-linecap="round" />
<polyline points="522.6,610.8 508.9,616.8 498.3,635.1 483.1,653.3 467.9,669.1" fill="none" stroke="#eb8a70" stroke-width="1.3" stroke-linejoin="round" stroke-linecap="round" />
<polyline points="600.0,659.4 618.2,647.2 639.5,622.9" fill="none" stroke="#eb8a70" stroke-width="1.4" stroke-linejoin="round" stroke-linecap="round" />
<polyline points="23.0,542.4 80.7,545.5 135.4,550.0 162.7,565.2" fill="none" stroke="#8a8a8a" stroke-width="1.0" stroke-linejoin="round" stroke-linecap="round" />
<polyline points="174.9,565.2 190.1,544.0 184.0,525.7 177.9,504.5 184.0,495.4 208.3,493.8 259.9,503.0 281.2,507.5" fill="none" stroke="#8a8a8a" stroke-width="1.0" stroke-linejoin="round" stroke-linecap="round" />
<polyline points="422.4,468.0 443.6,477.1 492.2,501.4 522.6,522.7 559.0,540.9 583.3,568.2 598.5,604.7 610.0,598.6" fill="none" stroke="#8a8a8a" stroke-width="1.0" stroke-linejoin="round" stroke-linecap="round" />
<polyline points="492.2,604.7 522.6,598.6 568.1,592.5 592.4,607.7" fill="none" stroke="#8a8a8a" stroke-width="1.0" stroke-linejoin="round" stroke-linecap="round" />
<polyline points="600.0,595.6 618.2,598.6 627.3,613.8 675.9,610.8 703.2,589.5 721.5,604.7 739.7,610.8" fill="none" stroke="#8a8a8a" stroke-width="1.0" stroke-linejoin="round" stroke-linecap="round" />
<polyline points="937.7,580.4 949.8,595.6 959.0,622.9 971.1,641.1 983.2,653.3 992.4,669.1" fill="none" stroke="#8a8a8a" stroke-width="1.0" stroke-linejoin="round" stroke-linecap="round" />
<polyline points="431.5,644.2 461.8,625.9 492.2,616.8" fill="none" stroke="#8a8a8a" stroke-width="0.9" stroke-linejoin="round" stroke-linecap="round" stroke-dasharray="2 1.5"/>
<polyline points="654.7,613.8 669.8,635.1 691.1,662.4 700.2,669.1" fill="none" stroke="#8a8a8a" stroke-width="0.9" stroke-linejoin="round" stroke-linecap="round" stroke-dasharray="2 1.5"/>
<polyline points="565.1,537.9 610.0,519.7" fill="none" stroke="#8a8a8a" stroke-width="0.9" stroke-linejoin="round" stroke-linecap="round" stroke-dasharray="2 1.5"/>
<polyline points="600.0,510.6 618.2,489.3 627.3,468.0" fill="none" stroke="#8a8a8a" stroke-width="0.9" stroke-linejoin="round" stroke-linecap="round" stroke-dasharray="2 1.5"/>
<polyline points="20.0,545.5 38.2,551.5 80.7,556.1 120.2,559.1 162.7,566.7 177.9,565.2 202.2,547.0 232.6,525.7 262.9,504.5 281.2,492.3 293.3,474.1 320.0,468.0" fill="none" stroke="#e6799a" stroke-width="1.7" stroke-linejoin="round" stroke-linecap="round" />
<polyline points="310.0,469.6 370.7,469.6 431.5,492.3 443.6,504.5 452.7,510.6 461.8,518.1 504.4,528.8 531.7,553.1 552.9,568.2 574.2,583.4" fill="none" stroke="#e6799a" stroke-width="1.7" stroke-linejoin="round" stroke-linecap="round" />
<polyline points="559.0,468.0 556.0,483.2 549.9,501.4 543.8,525.7 534.7,547.0 528.6,562.2 528.6,586.5 534.7,607.7 537.8,622.9 546.9,635.1 556.0,647.2 574.2,659.4 589.4,662.4 610.0,650.2" fill="none" stroke="#e6799a" stroke-width="1.7" stroke-linejoin="round" stroke-linecap="round" />
<polyline points="600.0,656.3 618.2,644.2 630.4,644.2 660.7,653.3 688.1,654.8 703.2,669.1" fill="none" stroke="#e6799a" stroke-width="1.7" stroke-linejoin="round" stroke-linecap="round" />
<path fill="#d0702e" d="M160.7 472.7l2 -3.3l2 3.3zM169.8 474.2l2 -3.3l2 3.3zM200.2 474.2l2 -3.3l2 3.3zM209.3 475.7l2 -3.3l2 3.3zM200.2 480.3l2 -3.3l2 3.3zM216.9 495.4l2 -3.3l2 3.3zM259.4 489.4l2 -3.3l2 3.3zM274.6 484.8l2 -3.3l2 3.3zM309.5 506.1l2 -3.3l2 3.3zM39.3 594.1l2 -3.3l2 3.3zM48.4 589.6l2 -3.3l2 3.3zM56.0 580.5l2 -3.3l2 3.3zM65.1 594.1l2 -3.3l2 3.3zM72.7 600.2l2 -3.3l2 3.3zM37.7 604.8l2 -3.3l2 3.3zM48.4 604.8l2 -3.3l2 3.3zM60.5 604.8l2 -3.3l2 3.3zM74.2 609.3l2 -3.3l2 3.3zM39.3 613.9l2 -3.3l2 3.3zM60.5 615.4l2 -3.3l2 3.3zM87.8 612.4l2 -3.3l2 3.3zM97.0 609.3l2 -3.3l2 3.3zM106.1 618.4l2 -3.3l2 3.3zM112.1 612.4l2 -3.3l2 3.3zM33.2 626.0l2 -3.3l2 3.3zM45.3 626.0l2 -3.3l2 3.3zM63.6 624.5l2 -3.3l2 3.3zM75.7 630.6l2 -3.3l2 3.3zM90.9 621.5l2 -3.3l2 3.3zM87.8 633.6l2 -3.3l2 3.3zM109.1 624.5l2 -3.3l2 3.3zM118.2 627.5l2 -3.3l2 3.3zM36.2 642.7l2 -3.3l2 3.3zM42.3 641.2l2 -3.3l2 3.3zM48.4 642.7l2 -3.3l2 3.3zM42.3 645.8l2 -3.3l2 3.3zM84.8 641.2l2 -3.3l2 3.3zM103.0 638.2l2 -3.3l2 3.3zM109.1 645.8l2 -3.3l2 3.3zM42.3 654.9l2 -3.3l2 3.3zM54.4 654.9l2 -3.3l2 3.3zM87.8 648.8l2 -3.3l2 3.3zM109.1 648.8l2 -3.3l2 3.3zM69.6 667.0l2 -3.3l2 3.3zM90.9 667.0l2 -3.3l2 3.3zM22.6 566.8l2 -3.3l2 3.3zM21.0 618.4l2 -3.3l2 3.3zM209.3 662.5l2 -3.3l2 3.3zM311.0 506.1l2 -3.3l2 3.3zM323.2 515.2l2 -3.3l2 3.3zM324.7 521.3l2 -3.3l2 3.3zM338.4 530.4l2 -3.3l2 3.3zM346.0 539.5l2 -3.3l2 3.3zM365.7 548.6l2 -3.3l2 3.3zM370.3 556.2l2 -3.3l2 3.3zM370.3 560.7l2 -3.3l2 3.3zM383.9 566.8l2 -3.3l2 3.3zM388.5 575.9l2 -3.3l2 3.3zM391.5 580.5l2 -3.3l2 3.3zM399.1 586.6l2 -3.3l2 3.3zM380.9 585.0l2 -3.3l2 3.3zM387.0 583.5l2 -3.3l2 3.3zM399.1 594.1l2 -3.3l2 3.3zM415.8 607.8l2 -3.3l2 3.3zM429.5 595.7l2 -3.3l2 3.3zM421.9 624.5l2 -3.3l2 3.3zM409.7 638.2l2 -3.3l2 3.3zM414.3 638.2l2 -3.3l2 3.3zM421.9 635.1l2 -3.3l2 3.3zM487.2 471.2l2 -3.3l2 3.3zM517.5 475.7l2 -3.3l2 3.3zM595.0 478.7l2 -3.3l2 3.3zM514.5 487.9l2 -3.3l2 3.3zM537.3 490.9l2 -3.3l2 3.3zM572.2 486.3l2 -3.3l2 3.3zM578.3 489.4l2 -3.3l2 3.3zM591.9 487.9l2 -3.3l2 3.3zM584.3 495.4l2 -3.3l2 3.3zM590.4 495.4l2 -3.3l2 3.3zM511.5 500.0l2 -3.3l2 3.3zM532.7 504.6l2 -3.3l2 3.3zM540.3 500.0l2 -3.3l2 3.3zM558.5 509.1l2 -3.3l2 3.3zM585.9 501.5l2 -3.3l2 3.3zM593.5 506.1l2 -3.3l2 3.3zM587.4 510.6l2 -3.3l2 3.3zM595.0 513.7l2 -3.3l2 3.3zM514.5 510.6l2 -3.3l2 3.3zM547.9 516.7l2 -3.3l2 3.3zM560.0 528.9l2 -3.3l2 3.3zM567.6 525.8l2 -3.3l2 3.3zM593.5 521.3l2 -3.3l2 3.3zM584.3 534.9l2 -3.3l2 3.3zM596.5 536.4l2 -3.3l2 3.3zM598.0 531.9l2 -3.3l2 3.3zM596.5 650.3l2 -3.3l2 3.3zM508.4 668.5l2 -3.3l2 3.3zM517.5 667.0l2 -3.3l2 3.3zM617.7 481.8l2 -3.3l2 3.3zM631.4 480.3l2 -3.3l2 3.3zM646.6 472.7l2 -3.3l2 3.3zM651.1 477.2l2 -3.3l2 3.3zM658.7 475.7l2 -3.3l2 3.3zM657.2 481.8l2 -3.3l2 3.3zM680.0 477.2l2 -3.3l2 3.3zM684.5 483.3l2 -3.3l2 3.3zM696.7 474.2l2 -3.3l2 3.3zM637.5 493.9l2 -3.3l2 3.3zM617.7 506.1l2 -3.3l2 3.3zM620.8 498.5l2 -3.3l2 3.3zM608.6 522.8l2 -3.3l2 3.3zM598.0 531.9l2 -3.3l2 3.3zM689.1 506.1l2 -3.3l2 3.3zM695.2 512.2l2 -3.3l2 3.3zM705.8 515.2l2 -3.3l2 3.3zM711.9 509.1l2 -3.3l2 3.3zM721.0 533.4l2 -3.3l2 3.3zM743.8 506.1l2 -3.3l2 3.3zM757.4 498.5l2 -3.3l2 3.3zM762.0 516.7l2 -3.3l2 3.3zM768.1 519.7l2 -3.3l2 3.3zM780.2 507.6l2 -3.3l2 3.3zM786.3 507.6l2 -3.3l2 3.3zM790.8 522.8l2 -3.3l2 3.3zM758.9 525.8l2 -3.3l2 3.3zM768.1 531.9l2 -3.3l2 3.3zM809.1 477.2l2 -3.3l2 3.3zM828.8 493.9l2 -3.3l2 3.3zM840.9 490.9l2 -3.3l2 3.3zM850.0 480.3l2 -3.3l2 3.3zM860.7 478.7l2 -3.3l2 3.3zM874.3 474.2l2 -3.3l2 3.3zM894.1 497.0l2 -3.3l2 3.3zM868.3 503.0l2 -3.3l2 3.3zM854.6 506.1l2 -3.3l2 3.3zM807.5 525.8l2 -3.3l2 3.3zM822.7 538.0l2 -3.3l2 3.3zM824.2 544.0l2 -3.3l2 3.3zM822.7 554.7l2 -3.3l2 3.3zM859.2 551.6l2 -3.3l2 3.3zM860.7 557.7l2 -3.3l2 3.3zM888.0 554.7l2 -3.3l2 3.3zM831.8 569.8l2 -3.3l2 3.3zM839.4 579.0l2 -3.3l2 3.3zM859.2 582.0l2 -3.3l2 3.3zM872.8 569.8l2 -3.3l2 3.3zM878.9 588.1l2 -3.3l2 3.3zM897.1 600.2l2 -3.3l2 3.3zM842.5 592.6l2 -3.3l2 3.3zM857.6 595.7l2 -3.3l2 3.3zM862.2 601.7l2 -3.3l2 3.3zM833.3 595.7l2 -3.3l2 3.3zM816.6 597.2l2 -3.3l2 3.3zM804.5 591.1l2 -3.3l2 3.3zM853.1 615.4l2 -3.3l2 3.3zM830.3 615.4l2 -3.3l2 3.3zM857.6 620.0l2 -3.3l2 3.3zM871.3 618.4l2 -3.3l2 3.3zM880.4 624.5l2 -3.3l2 3.3zM885.0 607.8l2 -3.3l2 3.3zM891.0 626.0l2 -3.3l2 3.3zM892.6 635.1l2 -3.3l2 3.3zM865.2 638.2l2 -3.3l2 3.3zM881.9 648.8l2 -3.3l2 3.3zM836.4 638.2l2 -3.3l2 3.3zM840.9 648.8l2 -3.3l2 3.3zM834.9 654.9l2 -3.3l2 3.3zM667.2 544.0l2 -3.3l2 3.3zM667.2 551.6l2 -3.3l2 3.3zM636.0 536.4l2 -3.3l2 3.3zM690.6 571.4l2 -3.3l2 3.3zM707.3 583.5l2 -3.3l2 3.3zM708.8 588.1l2 -3.3l2 3.3zM745.3 577.4l2 -3.3l2 3.3zM736.2 592.6l2 -3.3l2 3.3zM701.2 612.4l2 -3.3l2 3.3zM705.8 620.0l2 -3.3l2 3.3zM678.5 630.6l2 -3.3l2 3.3zM686.7 629.1l2 -3.3l2 3.3zM686.1 635.1l2 -3.3l2 3.3zM713.4 645.8l2 -3.3l2 3.3zM719.5 665.5l2 -3.3l2 3.3zM708.8 668.5l2 -3.3l2 3.3zM820.3 662.5l2 -3.3l2 3.3zM827.3 664.0l2 -3.3l2 3.3zM897.1 664.0l2 -3.3l2 3.3zM923.6 474.2l2 -3.3l2 3.3zM950.9 474.2l2 -3.3l2 3.3zM905.3 483.3l2 -3.3l2 3.3zM906.8 489.4l2 -3.3l2 3.3zM911.4 489.4l2 -3.3l2 3.3zM926.6 483.3l2 -3.3l2 3.3zM935.7 495.4l2 -3.3l2 3.3zM944.8 492.4l2 -3.3l2 3.3zM934.2 500.0l2 -3.3l2 3.3zM926.6 498.5l2 -3.3l2 3.3zM943.3 503.0l2 -3.3l2 3.3zM888.6 501.5l2 -3.3l2 3.3zM899.3 504.6l2 -3.3l2 3.3zM909.9 509.1l2 -3.3l2 3.3zM926.6 510.6l2 -3.3l2 3.3zM884.1 515.2l2 -3.3l2 3.3zM891.7 516.7l2 -3.3l2 3.3zM879.5 519.7l2 -3.3l2 3.3zM953.9 512.2l2 -3.3l2 3.3zM953.9 521.3l2 -3.3l2 3.3zM897.7 530.4l2 -3.3l2 3.3zM885.6 531.9l2 -3.3l2 3.3zM908.4 538.0l2 -3.3l2 3.3zM929.6 539.5l2 -3.3l2 3.3zM937.2 542.5l2 -3.3l2 3.3zM953.9 536.4l2 -3.3l2 3.3zM953.9 544.0l2 -3.3l2 3.3zM969.1 544.0l2 -3.3l2 3.3zM967.6 547.1l2 -3.3l2 3.3zM917.5 550.1l2 -3.3l2 3.3zM888.6 554.7l2 -3.3l2 3.3zM976.7 554.7l2 -3.3l2 3.3zM988.8 554.7l2 -3.3l2 3.3zM991.9 548.6l2 -3.3l2 3.3zM996.4 528.9l2 -3.3l2 3.3zM991.9 519.7l2 -3.3l2 3.3zM1002.5 512.2l2 -3.3l2 3.3zM1020.7 522.8l2 -3.3l2 3.3zM1025.3 519.7l2 -3.3l2 3.3zM994.9 484.8l2 -3.3l2 3.3zM1007.1 487.9l2 -3.3l2 3.3zM1022.2 484.8l2 -3.3l2 3.3zM1035.9 472.7l2 -3.3l2 3.3zM1049.6 483.3l2 -3.3l2 3.3zM1060.2 478.7l2 -3.3l2 3.3zM1070.8 478.7l2 -3.3l2 3.3zM1067.8 486.3l2 -3.3l2 3.3zM1045.0 495.4l2 -3.3l2 3.3zM1054.1 501.5l2 -3.3l2 3.3zM1060.2 493.9l2 -3.3l2 3.3zM1075.4 506.1l2 -3.3l2 3.3zM1087.5 492.4l2 -3.3l2 3.3zM1093.6 504.6l2 -3.3l2 3.3zM1107.3 513.7l2 -3.3l2 3.3zM1095.1 518.2l2 -3.3l2 3.3zM1101.2 521.3l2 -3.3l2 3.3zM1043.5 522.8l2 -3.3l2 3.3zM1051.1 521.3l2 -3.3l2 3.3zM1038.9 528.9l2 -3.3l2 3.3zM1064.8 536.4l2 -3.3l2 3.3zM1034.4 539.5l2 -3.3l2 3.3zM1020.7 556.2l2 -3.3l2 3.3zM1010.1 557.7l2 -3.3l2 3.3zM1057.2 559.2l2 -3.3l2 3.3zM1038.9 548.6l2 -3.3l2 3.3zM1035.9 565.3l2 -3.3l2 3.3zM1046.5 569.8l2 -3.3l2 3.3zM1057.2 572.9l2 -3.3l2 3.3zM1066.3 577.4l2 -3.3l2 3.3zM1089.1 551.6l2 -3.3l2 3.3zM1087.5 563.8l2 -3.3l2 3.3zM1090.6 575.9l2 -3.3l2 3.3zM1096.6 574.4l2 -3.3l2 3.3zM1114.9 474.2l2 -3.3l2 3.3zM1125.5 481.8l2 -3.3l2 3.3zM1134.6 478.7l2 -3.3l2 3.3zM1163.5 472.7l2 -3.3l2 3.3zM1157.4 480.3l2 -3.3l2 3.3zM1155.9 490.9l2 -3.3l2 3.3zM1120.9 490.9l2 -3.3l2 3.3zM1140.7 510.6l2 -3.3l2 3.3zM1130.0 519.7l2 -3.3l2 3.3zM1119.4 534.9l2 -3.3l2 3.3zM1140.7 547.1l2 -3.3l2 3.3zM1128.5 553.1l2 -3.3l2 3.3zM1113.3 557.7l2 -3.3l2 3.3zM1130.0 565.3l2 -3.3l2 3.3zM1119.4 572.9l2 -3.3l2 3.3zM1110.3 580.5l2 -3.3l2 3.3zM1142.2 580.5l2 -3.3l2 3.3zM1166.5 539.5l2 -3.3l2 3.3zM1169.5 528.9l2 -3.3l2 3.3zM1163.5 560.7l2 -3.3l2 3.3zM1140.7 594.1l2 -3.3l2 3.3zM1165.0 589.6l2 -3.3l2 3.3zM1166.5 600.2l2 -3.3l2 3.3zM1128.5 598.7l2 -3.3l2 3.3zM1113.3 606.3l2 -3.3l2 3.3zM1116.4 609.3l2 -3.3l2 3.3zM1154.3 618.4l2 -3.3l2 3.3zM1155.9 624.5l2 -3.3l2 3.3zM1139.2 623.0l2 -3.3l2 3.3zM1169.5 632.1l2 -3.3l2 3.3zM1166.5 641.2l2 -3.3l2 3.3zM1154.3 651.8l2 -3.3l2 3.3zM1134.6 656.4l2 -3.3l2 3.3zM1107.3 665.5l2 -3.3l2 3.3zM1090.6 662.5l2 -3.3l2 3.3zM1076.9 651.8l2 -3.3l2 3.3zM1083.0 651.8l2 -3.3l2 3.3zM1095.1 654.9l2 -3.3l2 3.3zM1108.8 641.2l2 -3.3l2 3.3zM1081.5 629.1l2 -3.3l2 3.3zM1057.2 629.1l2 -3.3l2 3.3zM1051.1 648.8l2 -3.3l2 3.3zM1060.2 664.0l2 -3.3l2 3.3zM1032.9 624.5l2 -3.3l2 3.3zM1020.7 618.4l2 -3.3l2 3.3zM1007.1 610.8l2 -3.3l2 3.3zM990.4 598.7l2 -3.3l2 3.3zM982.8 604.8l2 -3.3l2 3.3zM984.3 616.9l2 -3.3l2 3.3zM998.0 588.1l2 -3.3l2 3.3zM1002.5 589.6l2 -3.3l2 3.3zM975.2 586.6l2 -3.3l2 3.3zM949.4 574.4l2 -3.3l2 3.3zM960.0 574.4l2 -3.3l2 3.3zM966.1 577.4l2 -3.3l2 3.3zM940.3 563.8l2 -3.3l2 3.3zM928.1 566.8l2 -3.3l2 3.3zM916.0 579.0l2 -3.3l2 3.3zM905.3 577.4l2 -3.3l2 3.3zM881.0 588.1l2 -3.3l2 3.3zM878.0 600.2l2 -3.3l2 3.3zM896.2 601.7l2 -3.3l2 3.3zM903.8 610.8l2 -3.3l2 3.3zM914.4 604.8l2 -3.3l2 3.3zM920.5 609.3l2 -3.3l2 3.3zM932.7 615.4l2 -3.3l2 3.3zM899.3 620.0l2 -3.3l2 3.3zM885.6 624.5l2 -3.3l2 3.3zM903.8 621.5l2 -3.3l2 3.3zM881.0 624.5l2 -3.3l2 3.3zM891.7 632.1l2 -3.3l2 3.3zM909.9 639.7l2 -3.3l2 3.3zM916.0 635.1l2 -3.3l2 3.3zM911.4 648.8l2 -3.3l2 3.3zM926.6 656.4l2 -3.3l2 3.3zM931.1 657.9l2 -3.3l2 3.3zM916.0 656.4l2 -3.3l2 3.3zM937.2 651.8l2 -3.3l2 3.3zM894.7 661.0l2 -3.3l2 3.3zM946.3 661.0l2 -3.3l2 3.3zM931.1 667.0l2 -3.3l2 3.3zM914.4 668.5l2 -3.3l2 3.3z"/>
</svg>
<div class="a tx" style="left:187.93px;top:477.00px;font-size:6.80px;color:#444;transform:translateX(-50%);text-shadow:0 0 1.5px #fff,0 0 1.5px #fff;">Pescia</div>
<div class="a tx" style="left:293.31px;top:472.00px;font-size:6.80px;color:#444;transform:translateX(-50%);text-shadow:0 0 1.5px #fff,0 0 1.5px #fff;">Serravalle Pistoiese</div>
<div class="a tx" style="left:279.64px;top:505.00px;font-size:6.80px;color:#444;transform:translateX(-50%);text-shadow:0 0 1.5px #fff,0 0 1.5px #fff;">Monsummano</div>
<div class="a tx" style="left:279.64px;top:512.00px;font-size:6.80px;color:#444;transform:translateX(-50%);text-shadow:0 0 1.5px #fff,0 0 1.5px #fff;">Terme</div>
<div class="a tx" style="left:50.37px;top:536.00px;font-size:9.00px;color:#444;transform:translateX(-50%);text-shadow:0 0 1.5px #fff,0 0 1.5px #fff;">Lucca</div>
<div class="a tx" style="left:101.99px;top:538.00px;font-size:6.80px;color:#444;transform:translateX(-50%);text-shadow:0 0 1.5px #fff,0 0 1.5px #fff;">Capannori</div>
<div class="a tx" style="left:230.45px;top:539.00px;font-size:6.80px;color:#444;transform:translateX(-50%);text-shadow:0 0 1.5px #fff,0 0 1.5px #fff;">Ponte Buggianese</div>
<div class="a tx" style="left:176.39px;top:566.00px;font-size:6.80px;color:#444;transform:translateX(-50%);text-shadow:0 0 1.5px #fff,0 0 1.5px #fff;">Altopascio</div>
<div class="a tx" style="left:275.09px;top:652.00px;font-size:6.80px;color:#444;transform:translateX(-50%);text-shadow:0 0 1.5px #fff,0 0 1.5px #fff;">Fucecchio</div>
<div class="a tx" style="left:418.41px;top:475.00px;font-size:6.80px;color:#444;transform:translateX(-50%);text-shadow:0 0 1.5px #fff,0 0 1.5px #fff;">Agliana</div>
<div class="a tx" style="left:487.04px;top:497.00px;font-size:9.00px;color:#444;transform:translateX(-50%);text-shadow:0 0 1.5px #fff,0 0 1.5px #fff;">Prato</div>
<div class="a tx" style="left:539.27px;top:514.00px;font-size:6.80px;color:#444;transform:translateX(-50%);text-shadow:0 0 1.5px #fff,0 0 1.5px #fff;">Calenzano</div>
<div class="a tx" style="left:399.58px;top:533.00px;font-size:6.80px;color:#444;transform:translateX(-50%);text-shadow:0 0 1.5px #fff,0 0 1.5px #fff;">Quarrata</div>
<div class="a tx" style="left:562.05px;top:548.00px;font-size:6.80px;color:#444;transform:translateX(-50%);text-shadow:0 0 1.5px #fff,0 0 1.5px #fff;">Sesto Fiorentino</div>
<div class="a tx" style="left:516.50px;top:559.00px;font-size:6.80px;color:#444;transform:translateX(-50%);text-shadow:0 0 1.5px #fff,0 0 1.5px #fff;">Campi Bisenzio</div>
<div class="a tx" style="left:429.95px;top:567.00px;font-size:6.80px;color:#444;transform:translateX(-50%);text-shadow:0 0 1.5px #fff,0 0 1.5px #fff;">Carmignano</div>
<div class="a tx" style="left:363.14px;top:593.00px;font-size:6.80px;color:#444;transform:translateX(-50%);text-shadow:0 0 1.5px #fff,0 0 1.5px #fff;">Vinci</div>
<div class="a tx" style="left:487.04px;top:601.00px;font-size:6.80px;color:#444;transform:translateX(-50%);text-shadow:0 0 1.5px #fff,0 0 1.5px #fff;">Signa</div>
<div class="a tx" style="left:495.24px;top:610.00px;font-size:6.80px;color:#444;transform:translateX(-50%);text-shadow:0 0 1.5px #fff,0 0 1.5px #fff;">Lastra a Signa</div>
<div class="a tx" style="left:552.03px;top:625.00px;font-size:6.80px;color:#444;transform:translateX(-50%);text-shadow:0 0 1.5px #fff,0 0 1.5px #fff;">Scandicci</div>
<div class="a tx" style="left:326.70px;top:622.00px;font-size:6.80px;color:#444;transform:translateX(-50%);text-shadow:0 0 1.5px #fff,0 0 1.5px #fff;">Cerreto Guidi</div>
<div class="a tx" style="left:430.86px;top:645.00px;font-size:6.80px;color:#444;transform:translateX(-50%);text-shadow:0 0 1.5px #fff,0 0 1.5px #fff;">Montelupo</div>
<div class="a tx" style="left:430.86px;top:652.00px;font-size:6.80px;color:#444;transform:translateX(-50%);text-shadow:0 0 1.5px #fff,0 0 1.5px #fff;">Fiorentino</div>
<div class="a tx" style="left:376.20px;top:663.00px;font-size:6.80px;color:#444;transform:translateX(-50%);text-shadow:0 0 1.5px #fff,0 0 1.5px #fff;">Empoli</div>
<div class="a tx" style="left:631.89px;top:574.00px;font-size:6.80px;color:#444;transform:translateX(-50%);text-shadow:0 0 1.5px #fff,0 0 1.5px #fff;">Fiesole</div>
<div class="a tx" style="left:739.69px;top:605.00px;font-size:6.80px;color:#444;transform:translateX(-50%);text-shadow:0 0 1.5px #fff,0 0 1.5px #fff;">Pontassieve</div>
<div class="a tx" style="left:651.62px;top:629.00px;font-size:6.80px;color:#444;transform:translateX(-50%);text-shadow:0 0 1.5px #fff,0 0 1.5px #fff;">Bagno a Ripoli</div>
<div class="a tx" style="left:603.64px;top:610.00px;font-size:9.00px;color:#444;transform:translateX(-50%);text-shadow:0 0 1.5px #fff,0 0 1.5px #fff;">Firenze</div>
<div class="a tx" style="left:105.94px;top:561.00px;font-size:6.30px;color:#7a5bc4;transform:translateX(-50%);text-shadow:0 0 1.5px #fff,0 0 1.5px #fff;font-style:italic;">Tassignano</div>
<div class="a tx" style="left:124.77px;top:603.00px;font-size:6.30px;color:#7a5bc4;transform:translateX(-50%);text-shadow:0 0 1.5px #fff,0 0 1.5px #fff;font-style:italic;">Cdv Delta</div>
<div class="a tx" style="left:124.77px;top:610.00px;font-size:6.30px;color:#7a5bc4;transform:translateX(-50%);text-shadow:0 0 1.5px #fff,0 0 1.5px #fff;font-style:italic;">Team Lucca</div>
<div class="a tx" style="left:375.29px;top:516.00px;font-size:6.30px;color:#7a5bc4;transform:translateX(-50%);text-shadow:0 0 1.5px #fff,0 0 1.5px #fff;font-style:italic;">Aviosuperficie</div>
<div class="a tx" style="left:375.29px;top:522.00px;font-size:6.30px;color:#7a5bc4;transform:translateX(-50%);text-shadow:0 0 1.5px #fff,0 0 1.5px #fff;font-style:italic;">I Pinguini</div>
<div class="a tx" style="left:562.05px;top:579.00px;font-size:6.30px;color:#7a5bc4;transform:translateX(-50%);text-shadow:0 0 1.5px #fff,0 0 1.5px #fff;font-style:italic;">Aeroporto</div>
<div class="a tx" style="left:562.05px;top:584.00px;font-size:6.30px;color:#7a5bc4;transform:translateX(-50%);text-shadow:0 0 1.5px #fff,0 0 1.5px #fff;font-style:italic;">Firenze</div>
<div class="a tx" style="left:562.05px;top:591.00px;font-size:6.30px;color:#7a5bc4;transform:translateX(-50%);text-shadow:0 0 1.5px #fff,0 0 1.5px #fff;font-style:italic;">Amerigo</div>
<div class="a tx" style="left:562.05px;top:597.00px;font-size:6.30px;color:#7a5bc4;transform:translateX(-50%);text-shadow:0 0 1.5px #fff,0 0 1.5px #fff;font-style:italic;">Vespucci</div>
<div class="a tx" style="left:398.07px;top:664.00px;font-size:6.30px;color:#7a5bc4;transform:translateX(-50%);text-shadow:0 0 1.5px #fff,0 0 1.5px #fff;font-style:italic;">Aviosuperficie</div>
<div class="a tx" style="left:201.29px;top:607.00px;font-size:6.60px;color:#5e9a55;transform:translateX(-50%);text-shadow:0 0 1.5px #fff,0 0 1.5px #fff;font-style:italic;">Riserva</div>
<div class="a tx" style="left:201.29px;top:614.00px;font-size:6.60px;color:#5e9a55;transform:translateX(-50%);text-shadow:0 0 1.5px #fff,0 0 1.5px #fff;font-style:italic;">delle Cerbaie</div>
<div class="a tx" style="left:201.29px;top:622.00px;font-size:6.60px;color:#5e9a55;transform:translateX(-50%);text-shadow:0 0 1.5px #fff,0 0 1.5px #fff;font-style:italic;">e del Padule</div>
<div class="a tx" style="left:201.29px;top:629.00px;font-size:6.60px;color:#5e9a55;transform:translateX(-50%);text-shadow:0 0 1.5px #fff,0 0 1.5px #fff;font-style:italic;">di Fucecchio</div>
<div class="a tx" style="left:252.31px;top:564.00px;font-size:6.00px;color:#4a90d0;transform:translateX(-50%);text-shadow:0 0 1.5px #fff,0 0 1.5px #fff;font-style:italic;">Bosco</div>
<div class="a tx" style="left:252.31px;top:570.00px;font-size:6.00px;color:#4a90d0;transform:translateX(-50%);text-shadow:0 0 1.5px #fff,0 0 1.5px #fff;font-style:italic;">del Padule</div>
<div class="a tx" style="left:252.31px;top:576.00px;font-size:6.00px;color:#4a90d0;transform:translateX(-50%);text-shadow:0 0 1.5px #fff,0 0 1.5px #fff;font-style:italic;">di Fucecchio</div>
<div class="a" style="left:56.44px;top:480.18px;width:35.53px;height:8.50px;background:#f8e8cf;border:0.8px solid #dcc29a;border-radius:1.5px;"></div>
<div class="a tx" style="left:74.21px;top:482.00px;font-size:6.20px;color:#555;transform:translateX(-50%);">SS12 var/B</div>
<div class="a" style="left:141.47px;top:502.96px;width:19.74px;height:8.20px;background:#f8e8cf;border:0.8px solid #dcc29a;border-radius:1.5px;"></div>
<div class="a tx" style="left:151.34px;top:504.00px;font-size:6.20px;color:#555;transform:translateX(-50%);">SR435</div>
<div class="a" style="left:279.64px;top:550.94px;width:31.28px;height:7.29px;background:#f8e8cf;border:0.8px solid #dcc29a;border-radius:1.5px;"></div>
<div class="a tx" style="left:295.28px;top:552.00px;font-size:6.20px;color:#555;transform:translateX(-50%);">SP436var1</div>
<div class="a" style="left:288.75px;top:584.95px;width:19.74px;height:6.98px;background:#f8e8cf;border:0.8px solid #dcc29a;border-radius:1.5px;"></div>
<div class="a tx" style="left:298.62px;top:586.00px;font-size:6.20px;color:#555;transform:translateX(-50%);">SR436</div>
<div class="a" style="left:441.19px;top:507.51px;width:13.97px;height:7.59px;background:#f6dde3;border:0.8px solid #d7a8b4;border-radius:1.5px;"></div>
<div class="a tx" style="left:448.17px;top:509.00px;font-size:6.20px;color:#555;transform:translateX(-50%);">A11</div>
<div class="a" style="left:755.48px;top:630.50px;width:16.09px;height:7.59px;background:#f8e8cf;border:0.8px solid #dcc29a;border-radius:1.5px;"></div>
<div class="a tx" style="left:763.53px;top:632.00px;font-size:6.20px;color:#555;transform:translateX(-50%);">SR69</div>
<div class="a" style="left:745.16px;top:660.26px;width:16.40px;height:7.59px;background:#f8e8cf;border:0.8px solid #dcc29a;border-radius:1.5px;"></div>
<div class="a tx" style="left:753.36px;top:661.00px;font-size:6.20px;color:#555;transform:translateX(-50%);">SR69</div>
<div class="a" style="left:1004.51px;top:654.49px;width:16.70px;height:7.90px;background:#f8e8cf;border:0.8px solid #dcc29a;border-radius:1.5px;"></div>
<div class="a tx" style="left:1012.86px;top:656.00px;font-size:6.20px;color:#555;transform:translateX(-50%);">SR71</div>
<svg class="a" style="left:102.9px;top:554.0px" width="6" height="6" viewBox="0 0 16 16"><path fill="#8a6fd0" d="M8 0.5c.8 0 1.2.8 1.2 1.8V6l6 3.5v1.6L9.2 9.3v3.3l2 1.5v1.3L8 14.6l-3.2.8v-1.3l2-1.5V9.3L.8 11.1V9.5l6-3.5V2.3C6.8 1.3 7.2.5 8 .5z"/></svg>
<svg class="a" style="left:120.2px;top:596.2px" width="6" height="6" viewBox="0 0 16 16"><path fill="#8a6fd0" d="M8 0.5c.8 0 1.2.8 1.2 1.8V6l6 3.5v1.6L9.2 9.3v3.3l2 1.5v1.3L8 14.6l-3.2.8v-1.3l2-1.5V9.3L.8 11.1V9.5l6-3.5V2.3C6.8 1.3 7.2.5 8 .5z"/></svg>
<svg class="a" style="left:271.5px;top:629.6px" width="6" height="6" viewBox="0 0 16 16"><path fill="#8a6fd0" d="M8 0.5c.8 0 1.2.8 1.2 1.8V6l6 3.5v1.6L9.2 9.3v3.3l2 1.5v1.3L8 14.6l-3.2.8v-1.3l2-1.5V9.3L.8 11.1V9.5l6-3.5V2.3C6.8 1.3 7.2.5 8 .5z"/></svg>
<svg class="a" style="left:372.3px;top:507.6px" width="6" height="6" viewBox="0 0 16 16"><path fill="#8a6fd0" d="M8 0.5c.8 0 1.2.8 1.2 1.8V6l6 3.5v1.6L9.2 9.3v3.3l2 1.5v1.3L8 14.6l-3.2.8v-1.3l2-1.5V9.3L.8 11.1V9.5l6-3.5V2.3C6.8 1.3 7.2.5 8 .5z"/></svg>
<svg class="a" style="left:559.0px;top:570.4px" width="6" height="6" viewBox="0 0 16 16"><path fill="#8a6fd0" d="M8 0.5c.8 0 1.2.8 1.2 1.8V6l6 3.5v1.6L9.2 9.3v3.3l2 1.5v1.3L8 14.6l-3.2.8v-1.3l2-1.5V9.3L.8 11.1V9.5l6-3.5V2.3C6.8 1.3 7.2.5 8 .5z"/></svg>
<svg class="a" style="left:399.6px;top:655.7px" width="6" height="6" viewBox="0 0 16 16"><path fill="#8a6fd0" d="M8 0.5c.8 0 1.2.8 1.2 1.8V6l6 3.5v1.6L9.2 9.3v3.3l2 1.5v1.3L8 14.6l-3.2.8v-1.3l2-1.5V9.3L.8 11.1V9.5l6-3.5V2.3C6.8 1.3 7.2.5 8 .5z"/></svg>
<div class="a" style="left:625.5px;top:511.8px;width:20px;height:20px;border-radius:50%;background:rgba(241,211,87,0.6)"></div>
<div class="a" style="left:628.0px;top:514.3px;width:15px;height:15px;border-radius:50%;background:rgba(240,194,12,0.75)"></div>
<div class="a tx" style="left:635.50px;top:519.00px;font-size:6.20px;color:#222;transform:translateX(-50%);">66</div>
<div class="a" style="left:656.8px;top:506.0px;width:20px;height:20px;border-radius:50%;background:rgba(241,211,87,0.6)"></div>
<div class="a" style="left:659.3px;top:508.5px;width:15px;height:15px;border-radius:50%;background:rgba(240,194,12,0.75)"></div>
<div class="a tx" style="left:666.80px;top:513.00px;font-size:6.20px;color:#222;transform:translateX(-50%);">66</div>
<div class="a" style="left:527.1px;top:571.3px;width:20px;height:20px;border-radius:50%;background:rgba(253,156,115,0.6)"></div>
<div class="a" style="left:529.6px;top:573.8px;width:15px;height:15px;border-radius:50%;background:rgba(241,128,23,0.75)"></div>
<div class="a tx" style="left:537.10px;top:579.00px;font-size:6.20px;color:#222;transform:translateX(-50%);">132</div>
<div class="a" style="left:592.5px;top:603.2px;width:20px;height:20px;border-radius:50%;background:rgba(253,156,115,0.6)"></div>
<div class="a" style="left:595.0px;top:605.7px;width:15px;height:15px;border-radius:50%;background:rgba(241,128,23,0.75)"></div>
<div class="a tx" style="left:602.50px;top:610.00px;font-size:6.20px;color:#222;transform:translateX(-50%);">660</div>
<div class="a" style="left:26.50px;top:473.00px;width:14.30px;height:27.50px;background:#fff;border:1px solid rgba(0,0,0,0.25);border-radius:2px;"></div>
<div class="a" style="left:27.50px;top:486.60px;width:12.30px;height:0.60px;background:#ddd;"></div>
<div class="a tx" style="left:33.60px;top:477.00px;font-size:9.00px;color:#111;transform:translateX(-50%);font-weight:bold;">+</div>
<div class="a" style="left:31.20px;top:492.60px;width:5.00px;height:1.20px;background:#111;"></div>
<div class="a" style="left:1154.50px;top:662.50px;width:20.50px;height:8.00px;background:rgba(255,255,255,0.85);"></div>
<div class="a tx" style="left:1164.70px;top:664.00px;font-size:6.00px;color:#0078a8;transform:translateX(-50%);">Leaflet</div></body></html>
